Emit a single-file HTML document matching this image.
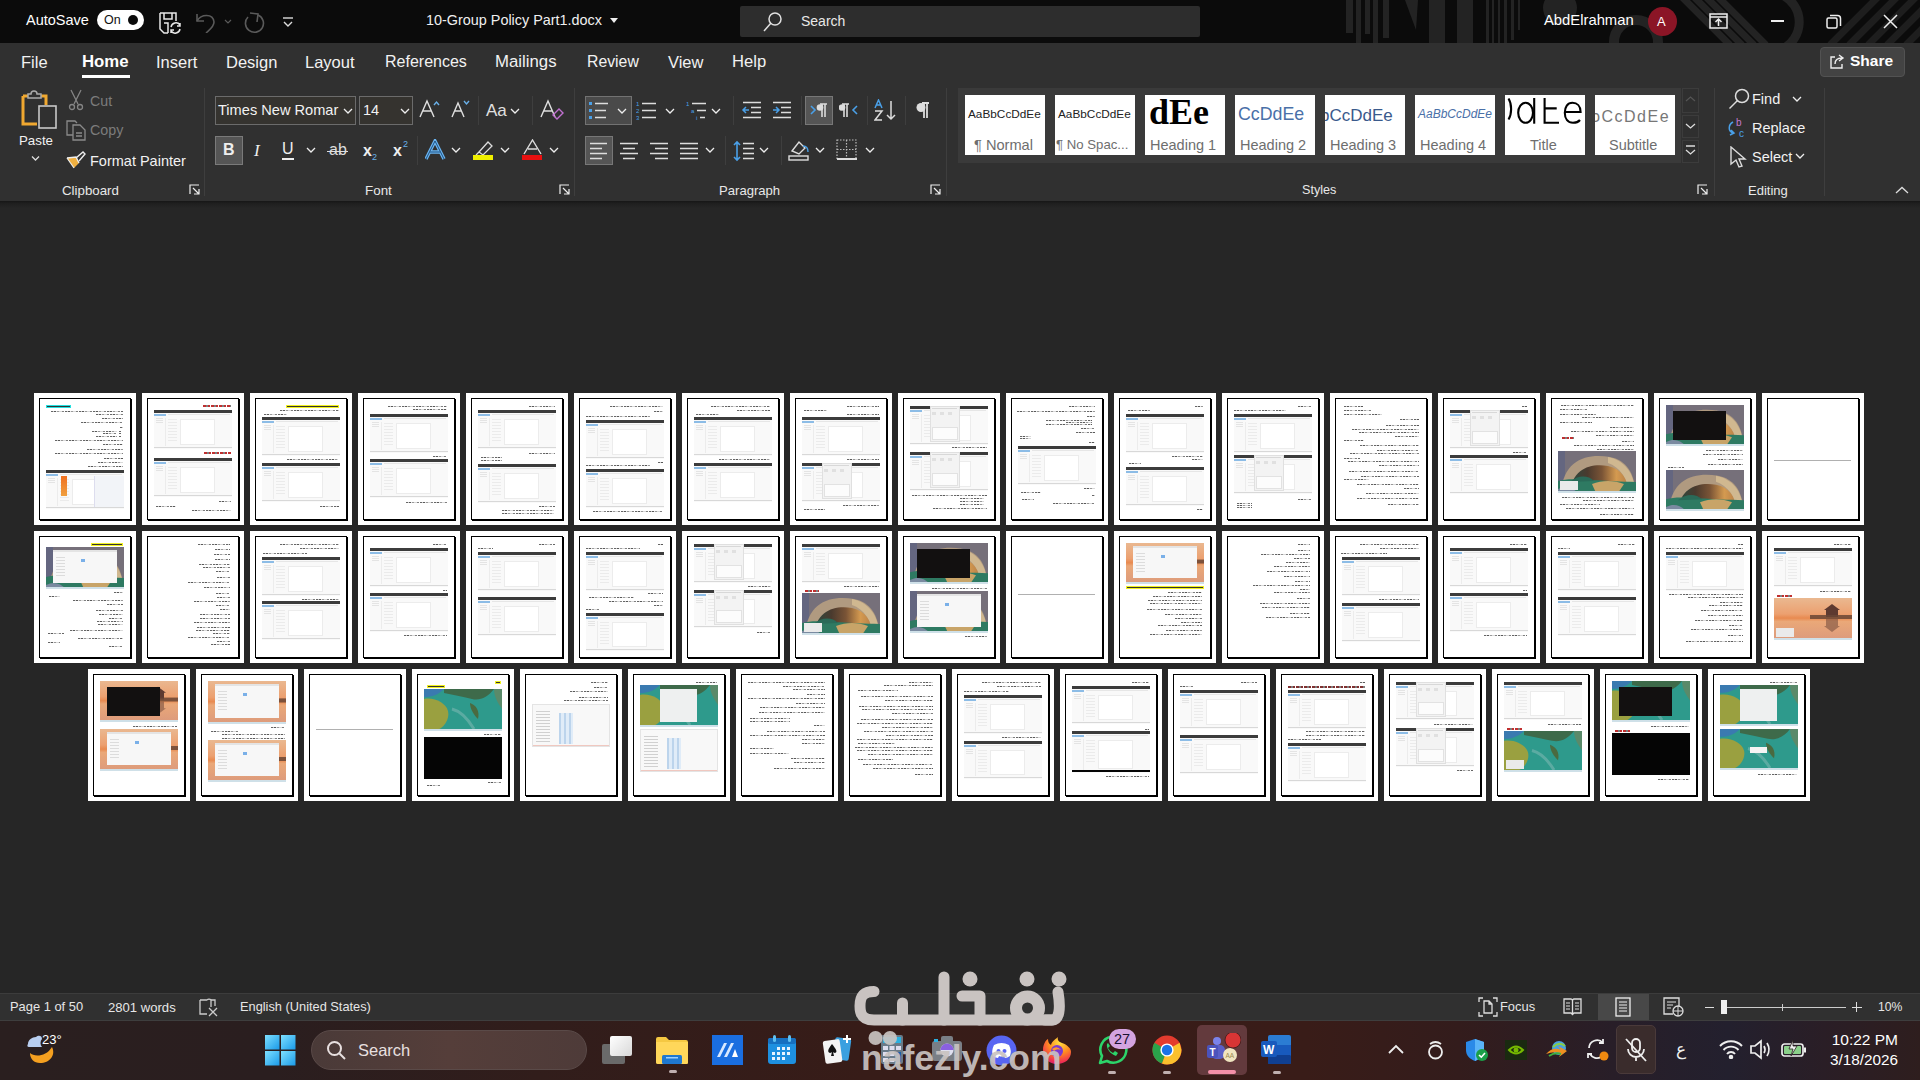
<!DOCTYPE html>
<html><head><meta charset="utf-8"><title>Word</title><style>
*{margin:0;padding:0;box-sizing:border-box}
html,body{width:1920px;height:1080px;overflow:hidden;background:#262626;font-family:"Liberation Sans",sans-serif;color:#fff}
.a{position:absolute}
.t{position:absolute;white-space:nowrap;line-height:1}
#title{left:0;top:0;width:1920px;height:43px;background:#0b0b0b}
#ribbon{left:0;top:43px;width:1920px;height:158px;background:#303030}
#shadow{left:0;top:201px;width:1920px;height:7px;background:linear-gradient(#161616,#1e1e1e 30%,#262626)}
#canvas{left:0;top:201px;width:1920px;height:792px;background:#262626}
#status{left:0;top:993px;width:1920px;height:28px;background:#303030;border-top:1px solid #3c3c3c;border-bottom:1px solid #3e3e3e}
#taskbar{left:0;top:1021px;width:1920px;height:59px;background:linear-gradient(90deg,#2a1f1f 0%,#2a1e1f 14%,#311d1b 28%,#371c18 45%,#391c18 68%,#331c1c 76%,#281e28 84%,#23202e 90%,#2a1e26 95%,#2e1e1e 100%)}
.pg{position:absolute;width:102px;height:132px;background:#fff;overflow:hidden}
.bd{position:absolute;left:5px;top:5px;width:92px;height:122px;border:1px solid #000;box-shadow:1px 1px 0 #000}
.ln{position:absolute;height:1px;background:#9a9a9a}
.tx{position:absolute;height:1px;background:repeating-linear-gradient(90deg,rgba(0,0,0,.6) 0 2px,rgba(0,0,0,.2) 2px 3px,rgba(0,0,0,.65) 3px 5px,rgba(0,0,0,.1) 5px 6px,rgba(0,0,0,.4) 6px 8px,rgba(0,0,0,.15) 8px 11px,rgba(0,0,0,.5) 11px 13px,transparent 13px 14px)}
.ss{position:absolute;background:#ececec;overflow:hidden}
.ss i{position:absolute;display:block}
</style></head>
<body>
<div id="title" class="a"></div>
<div id="ribbon" class="a"></div>
<div id="canvas" class="a"></div>
<div id="shadow" class="a"></div>
<div id="status" class="a"></div>
<div id="taskbar" class="a"></div>
<svg class="a" style="left:0;top:0" width="1920" height="43" viewBox="0 0 1920 43">
 <g fill="#232323">
  <rect x="1346" y="0" width="7" height="33"/>
  <rect x="1356" y="0" width="5" height="43"/>
  <rect x="1365" y="0" width="5" height="34"/>
  <rect x="1373" y="0" width="5" height="43"/>
  <rect x="1383" y="0" width="6" height="38"/>
  <path d="M1405 0 L1418 0 L1416 30 Z"/>
  <rect x="1429" y="0" width="16" height="43"/>
  <rect x="1457" y="0" width="16" height="43"/>
  <rect x="1486" y="0" width="3" height="43"/>
  <rect x="1492" y="0" width="2" height="43"/>
  <rect x="1498" y="0" width="2" height="43"/>
  <rect x="1504" y="0" width="3" height="43"/>
  <rect x="1511" y="0" width="3" height="40"/>
  <rect x="1518" y="0" width="2" height="30"/>
  <circle cx="1560" cy="8" r="17"/>
 </g>
 <g fill="none" stroke="#232323">
  <circle cx="1636" cy="42" r="22" stroke-width="10"/>
  <path d="M1780 -6 A30 30 0 0 1 1780 50" stroke-width="9"/>
 </g>
 <g stroke="#232323" stroke-width="7">
  <path d="M1680 -5 L1730 45 M1692 -5 L1742 45 M1704 -5 L1754 45 M1716 -5 L1766 45"/>
  <path d="M1830 45 L1880 -5 M1849 45 L1899 -5 M1868 45 L1918 -5 M1887 45 L1937 -5 M1906 45 L1956 -5" stroke="#1e1e1e"/>
 </g>
</svg>
<div class="t" style="left:26px;top:13px;font-size:14.5px;color:#fff">AutoSave</div>
<div class="a" style="left:97px;top:10px;width:47px;height:20px;border-radius:10px;background:#fff"></div>
<div class="t" style="left:104px;top:14px;font-size:12.5px;color:#111">On</div>
<div class="a" style="left:128px;top:15px;width:10px;height:10px;border-radius:5px;background:#0b0b0b"></div>
<svg class="a" style="left:158px;top:11px" width="24" height="24" viewBox="0 0 24 24" fill="none" stroke="#e8e8e8" stroke-width="1.5">
 <path d="M2 2 H18 V10 M2 2 V18 L6 22 H10"/><path d="M6 2 V8 H14 V2"/><path d="M6 12 H10 V22"/>
 <path d="M13 16 a5 5 0 0 1 9 -2 M22 12 v3 h-3 M22 18 a5 5 0 0 1 -9 2 M13 22 v-3 h3"/>
</svg>
<svg class="a" style="left:193px;top:11px" width="40" height="22" viewBox="0 0 40 22" fill="none" stroke="#5a5a5a" stroke-width="1.6">
 <path d="M4 3 L4 10 L11 10"/><path d="M4 10 C8 3 20 2 21 11 C21 16 16 19 13 22"/><path d="M32 9 l3 3 l3 -3" stroke-width="1.2"/>
</svg>
<svg class="a" style="left:241px;top:11px" width="24" height="24" viewBox="0 0 24 24" fill="none" stroke="#5a5a5a" stroke-width="1.6">
 <path d="M7 6 A9 9 0 1 0 17 4"/><path d="M9 2 L17 3 L16 11" />
</svg>
<svg class="a" style="left:281px;top:15px" width="14" height="14" viewBox="0 0 14 14" fill="none" stroke="#ddd" stroke-width="1.4">
 <path d="M2 3 H12"/><path d="M3 7 L7 11 L11 7"/>
</svg>
<div class="t" style="left:426px;top:13px;font-size:14.4px;color:#f0f0f0">10-Group Policy Part1.docx</div>
<svg class="a" style="left:609px;top:16px" width="10" height="8"><path d="M1 2 L9 2 L5 7 Z" fill="#eee"/></svg>
<div class="a" style="left:740px;top:6px;width:460px;height:31px;background:#2d2d2d;border-radius:2px"></div>
<svg class="a" style="left:762px;top:11px" width="22" height="22" viewBox="0 0 22 22" fill="none" stroke="#e0e0e0" stroke-width="1.5">
 <circle cx="13" cy="8" r="6"/><path d="M9 12 L2 20"/>
</svg>
<div class="t" style="left:801px;top:14px;font-size:14px;color:#e8e8e8">Search</div>
<div class="t" style="left:1544px;top:13px;font-size:14.8px;color:#fff">AbdElrahman</div>
<div class="a" style="left:1648px;top:7px;width:29px;height:29px;border-radius:50%;background:#8b1526"></div>
<div class="t" style="left:1657px;top:15px;font-size:13px;color:#fff">A</div>
<svg class="a" style="left:1709px;top:13px" width="22" height="18" viewBox="0 0 22 18" fill="none" stroke="#eee" stroke-width="1.5">
 <rect x="1" y="1" width="17" height="14"/><path d="M1 4 H18"/><path d="M9.5 13 V6 M6.5 9 L9.5 6 L12.5 9"/>
</svg>
<div class="a" style="left:1771px;top:20px;width:13px;height:1.5px;background:#eee"></div>
<svg class="a" style="left:1826px;top:14px" width="16" height="16" viewBox="0 0 16 16" fill="none" stroke="#eee" stroke-width="1.5">
 <rect x="1" y="4" width="10" height="10" rx="1.5"/><path d="M4 1.5 H11.5 A3 3 0 0 1 14.5 4.5 V12"/>
</svg>
<svg class="a" style="left:1883px;top:14px" width="15" height="15" viewBox="0 0 15 15" stroke="#eee" stroke-width="1.5">
 <path d="M1 1 L14 14 M14 1 L1 14"/>
</svg>

<!-- tabs -->
<div class="t" style="left:21px;top:54px;font-size:16.5px;color:#f2f2f2">File</div>
<div class="t" style="left:82px;top:54px;font-size:16.8px;color:#fff;font-weight:bold">Home</div>
<div class="a" style="left:82px;top:75px;width:48px;height:3px;background:#fff"></div>
<div class="t" style="left:156px;top:54px;font-size:16.5px;color:#f2f2f2">Insert</div>
<div class="t" style="left:226px;top:54px;font-size:16.5px;color:#f2f2f2">Design</div>
<div class="t" style="left:305px;top:54px;font-size:16.5px;color:#f2f2f2">Layout</div>
<div class="t" style="left:385px;top:54px;font-size:16px;color:#f2f2f2">References</div>
<div class="t" style="left:495px;top:54px;font-size:16.8px;color:#f2f2f2">Mailings</div>
<div class="t" style="left:587px;top:54px;font-size:15.8px;color:#f2f2f2">Review</div>
<div class="t" style="left:668px;top:54px;font-size:16.5px;color:#f2f2f2">View</div>
<div class="t" style="left:732px;top:54px;font-size:16.6px;color:#f2f2f2">Help</div>
<!-- share -->
<div class="a" style="left:1820px;top:47px;width:85px;height:30px;background:#434343;border:1px solid #525252;border-radius:4px"></div>
<svg class="a" style="left:1829px;top:53px" width="17" height="17" viewBox="0 0 17 17" fill="none" stroke="#eee" stroke-width="1.4"><path d="M6 4 H2 V15 H13 V11"/><path d="M6 11 C6 6 9 5 13 5 M10 2 L14 5 L10 8"/></svg>
<div class="t" style="left:1850px;top:53px;font-size:15.5px;color:#fff;font-weight:bold">Share</div>

<!-- separators -->
<div class="a" style="left:204px;top:88px;width:1px;height:108px;background:#3e3e3e"></div>
<div class="a" style="left:574px;top:88px;width:1px;height:108px;background:#3e3e3e"></div>
<div class="a" style="left:946px;top:88px;width:1px;height:108px;background:#3e3e3e"></div>
<div class="a" style="left:1714px;top:88px;width:1px;height:108px;background:#3e3e3e"></div>
<div class="a" style="left:1824px;top:88px;width:1px;height:108px;background:#3e3e3e"></div>

<!-- CLIPBOARD -->
<svg class="a" style="left:20px;top:88px" width="40" height="42" viewBox="0 0 40 42" fill="none">
 <path d="M3 8 H9 M19 8 H26 V17" stroke="#f0a830" stroke-width="3"/>
 <path d="M3 8 V36 H17" stroke="#f0a830" stroke-width="3"/>
 <path d="M8 10 V6 H11 A3 3 0 0 1 17 6 H21 V10 Z" stroke="#aaa" stroke-width="1.5" fill="#303030"/>
 <rect x="19" y="18" width="17" height="22" stroke="#c8c8c8" stroke-width="1.6" fill="#303030"/>
</svg>
<div class="t" style="left:19px;top:134px;font-size:13.3px;color:#f2f2f2">Paste</div>
<svg class="a" style="left:31px;top:155px" width="9" height="7"><path d="M1 1.5 L4.5 5 L8 1.5" stroke="#ddd" stroke-width="1.3" fill="none"/></svg>
<svg class="a" style="left:68px;top:89px" width="16" height="22" viewBox="0 0 16 22" fill="none" stroke="#858585" stroke-width="1.3">
 <path d="M3 1 L10 15 M13 1 L6 15"/><circle cx="4" cy="18" r="2.5"/><circle cx="12" cy="18" r="2.5"/>
</svg>
<div class="t" style="left:90px;top:94px;font-size:14.2px;color:#7c7c7c">Cut</div>
<svg class="a" style="left:65px;top:119px" width="22" height="22" viewBox="0 0 22 22" fill="none" stroke="#8a8a8a" stroke-width="1.3">
 <path d="M8 16 H2 V2 H10 L12 4"/><path d="M8 6 H15 L20 11 V21 H8 Z"/><path d="M11 14 H17 M11 17 H17"/>
</svg>
<div class="t" style="left:90px;top:123px;font-size:14.3px;color:#7c7c7c">Copy</div>
<svg class="a" style="left:65px;top:149px" width="22" height="20" viewBox="0 0 22 20" fill="none">
 <path d="M2 9 L9 19 L14 14 L11 8 Z" fill="#f0b040"/><path d="M2 9 L11 8 L14 14" stroke="#eee" stroke-width="1.3"/>
 <path d="M11 9 L18 3 L20 5 L14 12" stroke="#eee" stroke-width="1.4"/>
 <path d="M2 9 L9 19" stroke="#eee" stroke-width="1.2"/>
</svg>
<div class="t" style="left:90px;top:154px;font-size:14.5px;color:#f2f2f2">Format Painter</div>
<div class="t" style="left:62px;top:184px;font-size:13.3px;color:#e8e8e8">Clipboard</div>
<svg class="a" style="left:189px;top:184px" width="12" height="12" viewBox="0 0 12 12" fill="none" stroke="#eee" stroke-width="1.2"><path d="M1 10 V1 H10"/><path d="M4 4 L10 10 M10 5 V10 H5"/></svg>

<!-- FONT -->
<div class="a" style="left:215px;top:96px;width:141px;height:29px;background:#35332f;border:1px solid #6b6b6b"></div>
<div class="t" style="left:218px;top:103px;font-size:14.6px;color:#f2f2f2">Times New Romar</div>
<svg class="a" style="left:343px;top:107px" width="10" height="8"><path d="M1 2 L5 6 L9 2" stroke="#eee" stroke-width="1.3" fill="none"/></svg>
<div class="a" style="left:359px;top:96px;width:54px;height:29px;background:#35332f;border:1px solid #6b6b6b"></div>
<div class="t" style="left:363px;top:103px;font-size:14.6px;color:#f2f2f2">14</div>
<svg class="a" style="left:400px;top:107px" width="10" height="8"><path d="M1 2 L5 6 L9 2" stroke="#eee" stroke-width="1.3" fill="none"/></svg>
<svg class="a" style="left:419px;top:99px" width="22" height="20" viewBox="0 0 22 20" fill="none" stroke="#e0e0e0" stroke-width="1.4"><path d="M1 18 L8 2 L15 18 M4 12 H12"/><path d="M15 6 L17.5 3 L20 6" stroke="#6ab0e8"/></svg>
<svg class="a" style="left:450px;top:99px" width="22" height="20" viewBox="0 0 22 20" fill="none" stroke="#e0e0e0" stroke-width="1.4"><path d="M2 18 L8 4 L14 18 M5 12 H11"/><path d="M14 2 L16.5 5 L19 2" stroke="#6ab0e8"/></svg>
<div class="a" style="left:478px;top:96px;width:1px;height:29px;background:#3e3e3e"></div>
<div class="t" style="left:486px;top:102px;font-size:17px;color:#e0e0e0">Aa</div>
<svg class="a" style="left:510px;top:107px" width="10" height="8"><path d="M1 2 L5 6 L9 2" stroke="#eee" stroke-width="1.3" fill="none"/></svg>
<div class="a" style="left:532px;top:96px;width:1px;height:29px;background:#3e3e3e"></div>
<svg class="a" style="left:540px;top:99px" width="24" height="22" viewBox="0 0 24 22" fill="none" stroke-width="1.4"><path d="M1 18 L8 2 L15 18 M4 12 H12" stroke="#e0e0e0"/><path d="M13 16 L19 10 L23 14 L17 20 Z" stroke="#c070d0"/></svg>

<div class="a" style="left:215px;top:136px;width:28px;height:29px;background:#555;border:1px solid #7a7a7a"></div>
<div class="t" style="left:223px;top:142px;font-size:16px;color:#eee;font-weight:bold">B</div>
<div class="t" style="left:254px;top:142px;font-size:17px;color:#eee;font-style:italic;font-family:'Liberation Serif',serif">I</div>
<div class="t" style="left:282px;top:141px;font-size:16px;color:#eee">U</div>
<div class="a" style="left:282px;top:158px;width:12px;height:1.5px;background:#eee"></div>
<svg class="a" style="left:306px;top:146px" width="10" height="8"><path d="M1 2 L5 6 L9 2" stroke="#eee" stroke-width="1.3" fill="none"/></svg>
<div class="t" style="left:329px;top:142px;font-size:16px;color:#ddd">ab</div>
<div class="a" style="left:327px;top:151px;width:21px;height:1.3px;background:#ddd"></div>
<div class="t" style="left:363px;top:143px;font-size:16px;color:#eee;font-weight:bold">x</div>
<div class="t" style="left:372px;top:153px;font-size:9px;color:#6ab0e8">2</div>
<div class="t" style="left:393px;top:143px;font-size:16px;color:#eee;font-weight:bold">x</div>
<div class="t" style="left:403px;top:140px;font-size:9px;color:#6ab0e8">2</div>
<div class="a" style="left:417px;top:136px;width:1px;height:29px;background:#3e3e3e"></div>
<svg class="a" style="left:425px;top:139px" width="21" height="22" viewBox="0 0 21 22" fill="none"><path d="M1 20 L10 2 L19 20 M5 13 H15" stroke="#6ab4f0" stroke-width="3.4"/><path d="M1 20 L10 2 L19 20 M5 13 H15" stroke="#1e5080" stroke-width="1"/></svg>
<svg class="a" style="left:451px;top:146px" width="10" height="8"><path d="M1 2 L5 6 L9 2" stroke="#eee" stroke-width="1.3" fill="none"/></svg>
<svg class="a" style="left:473px;top:139px" width="22" height="22" viewBox="0 0 22 22" fill="none" stroke="#ddd" stroke-width="1.3"><path d="M6 13 L15 3 L19 7 L10 16 Z M6 13 L3 16"/></svg>
<div class="a" style="left:473px;top:155px;width:20px;height:5px;background:#f0f000"></div>
<svg class="a" style="left:500px;top:146px" width="10" height="8"><path d="M1 2 L5 6 L9 2" stroke="#eee" stroke-width="1.3" fill="none"/></svg>
<svg class="a" style="left:522px;top:139px" width="21" height="16" viewBox="0 0 21 16" fill="none" stroke="#ddd" stroke-width="1.4"><path d="M2 15 L10.5 1 L19 15 M6 10 H15"/></svg>
<div class="a" style="left:522px;top:155px;width:20px;height:5px;background:#e81010"></div>
<svg class="a" style="left:549px;top:146px" width="10" height="8"><path d="M1 2 L5 6 L9 2" stroke="#eee" stroke-width="1.3" fill="none"/></svg>
<div class="t" style="left:365px;top:184px;font-size:13.4px;color:#e8e8e8">Font</div>
<svg class="a" style="left:559px;top:184px" width="12" height="12" viewBox="0 0 12 12" fill="none" stroke="#eee" stroke-width="1.2"><path d="M1 10 V1 H10"/><path d="M4 4 L10 10 M10 5 V10 H5"/></svg>

<!-- PARAGRAPH -->
<div class="a" style="left:585px;top:96px;width:47px;height:29px;background:#4a4a4a;border:1px solid #727272"></div>
<svg class="a" style="left:588px;top:100px" width="24" height="20" viewBox="0 0 24 20" fill="none">
 <rect x="1" y="2" width="3" height="3" fill="#4aa0e8"/><rect x="1" y="9" width="3" height="3" fill="#4aa0e8"/><rect x="1" y="16" width="3" height="3" fill="#4aa0e8"/>
 <path d="M7 3.5 H20 M7 10.5 H18 M7 17.5 H18" stroke="#ddd" stroke-width="1.4"/></svg>
<svg class="a" style="left:617px;top:107px" width="10" height="8"><path d="M1 2 L5 6 L9 2" stroke="#eee" stroke-width="1.3" fill="none"/></svg>
<svg class="a" style="left:636px;top:100px" width="24" height="20" viewBox="0 0 24 20" fill="none">
 <text x="0" y="6" font-size="6" fill="#4aa0e8" font-family="Liberation Sans">1</text><text x="0" y="13" font-size="6" fill="#4aa0e8" font-family="Liberation Sans">2</text><text x="0" y="20" font-size="6" fill="#4aa0e8" font-family="Liberation Sans">3</text>
 <path d="M6 3.5 H20 M6 10.5 H20 M6 17.5 H20" stroke="#ddd" stroke-width="1.4"/></svg>
<svg class="a" style="left:665px;top:107px" width="10" height="8"><path d="M1 2 L5 6 L9 2" stroke="#eee" stroke-width="1.3" fill="none"/></svg>
<svg class="a" style="left:686px;top:100px" width="24" height="20" viewBox="0 0 24 20" fill="none">
 <text x="0" y="6" font-size="6" fill="#4aa0e8" font-family="Liberation Sans">1</text><text x="5" y="13" font-size="6" fill="#4aa0e8" font-family="Liberation Sans">a</text><text x="10" y="20" font-size="6" fill="#4aa0e8" font-family="Liberation Sans">i</text>
 <path d="M6 3.5 H20 M11 10.5 H20 M14 17.5 H19" stroke="#ddd" stroke-width="1.4"/></svg>
<svg class="a" style="left:711px;top:107px" width="10" height="8"><path d="M1 2 L5 6 L9 2" stroke="#eee" stroke-width="1.3" fill="none"/></svg>
<div class="a" style="left:733px;top:96px;width:1px;height:29px;background:#3e3e3e"></div>
<svg class="a" style="left:741px;top:100px" width="22" height="20" viewBox="0 0 22 20" fill="none">
 <path d="M2 2.5 H20 M10 7.5 H20 M10 12.5 H20 M2 17.5 H20" stroke="#ddd" stroke-width="1.4"/><path d="M8 10 H2 M5 7 L2 10 L5 13" stroke="#4aa0e8" stroke-width="1.5"/></svg>
<svg class="a" style="left:771px;top:100px" width="22" height="20" viewBox="0 0 22 20" fill="none">
 <path d="M2 2.5 H20 M10 7.5 H20 M10 12.5 H20 M2 17.5 H20" stroke="#ddd" stroke-width="1.4"/><path d="M2 10 H8 M5 7 L8 10 L5 13" stroke="#4aa0e8" stroke-width="1.5"/></svg>
<div class="a" style="left:801px;top:96px;width:1px;height:29px;background:#3e3e3e"></div>
<div class="a" style="left:805px;top:96px;width:28px;height:29px;background:#555;border:1px solid #777"></div>
<svg class="a" style="left:810px;top:102px" width="20" height="16" viewBox="0 0 20 16" fill="none"><path d="M1 4 L5 8 L1 12" stroke="#4aa0e8" stroke-width="1.6"/><path d="M10 2 H17 M12 2 V15 M15 2 V15" stroke="#ddd" stroke-width="1.6"/><circle cx="10" cy="5.5" r="3.3" fill="#ddd"/></svg>
<svg class="a" style="left:839px;top:102px" width="20" height="16" viewBox="0 0 20 16" fill="none"><path d="M18 4 L14 8 L18 12" stroke="#4aa0e8" stroke-width="1.6"/><path d="M3 2 H10 M5 2 V15 M8 2 V15" stroke="#ddd" stroke-width="1.6"/><circle cx="3" cy="5.5" r="3.3" fill="#ddd"/></svg>
<div class="a" style="left:867px;top:96px;width:1px;height:29px;background:#3e3e3e"></div>
<svg class="a" style="left:874px;top:99px" width="24" height="22" viewBox="0 0 24 22" fill="none">
 <path d="M1 9 L4.5 1 L8 9 M2.5 6 H6.5" stroke="#4aa0e8" stroke-width="1.5"/><path d="M1 12 H8 L1 21 H8" stroke="#ddd" stroke-width="1.5"/><path d="M17 2 V20 M13 16 L17 20 L21 16" stroke="#ddd" stroke-width="1.5"/></svg>
<div class="a" style="left:905px;top:96px;width:1px;height:29px;background:#3e3e3e"></div>
<svg class="a" style="left:915px;top:101px" width="16" height="18" viewBox="0 0 16 18" fill="none"><path d="M7 2 H14 M9 2 V17 M12 2 V17" stroke="#ddd" stroke-width="1.8"/><circle cx="6" cy="6.5" r="4.5" fill="#ddd"/></svg>

<div class="a" style="left:585px;top:136px;width:28px;height:29px;background:#555;border:1px solid #777"></div>
<svg class="a" style="left:589px;top:141px" width="20" height="20" viewBox="0 0 20 20" fill="none" stroke="#ddd" stroke-width="1.4"><path d="M1 2.5 H18 M1 7.5 H13 M1 12.5 H18 M1 17.5 H13"/></svg>
<svg class="a" style="left:619px;top:141px" width="20" height="20" viewBox="0 0 20 20" fill="none" stroke="#ddd" stroke-width="1.4"><path d="M1 2.5 H19 M4 7.5 H16 M1 12.5 H19 M4 17.5 H16"/></svg>
<svg class="a" style="left:649px;top:141px" width="20" height="20" viewBox="0 0 20 20" fill="none" stroke="#ddd" stroke-width="1.4"><path d="M1 2.5 H19 M6 7.5 H19 M1 12.5 H19 M6 17.5 H19"/></svg>
<svg class="a" style="left:679px;top:141px" width="20" height="20" viewBox="0 0 20 20" fill="none" stroke="#ddd" stroke-width="1.4"><path d="M1 2.5 H19 M1 7.5 H19 M1 12.5 H19 M1 17.5 H19"/></svg>
<svg class="a" style="left:705px;top:146px" width="10" height="8"><path d="M1 2 L5 6 L9 2" stroke="#eee" stroke-width="1.3" fill="none"/></svg>
<div class="a" style="left:725px;top:136px;width:1px;height:29px;background:#3e3e3e"></div>
<svg class="a" style="left:733px;top:140px" width="22" height="22" viewBox="0 0 22 22" fill="none">
 <path d="M4 2 V20 M1 5 L4 2 L7 5 M1 17 L4 20 L7 17" stroke="#4aa0e8" stroke-width="1.6"/><path d="M10 3.5 H21 M10 8.5 H21 M10 13.5 H21 M10 18.5 H21" stroke="#ddd" stroke-width="1.4"/></svg>
<svg class="a" style="left:759px;top:146px" width="10" height="8"><path d="M1 2 L5 6 L9 2" stroke="#eee" stroke-width="1.3" fill="none"/></svg>
<div class="a" style="left:781px;top:136px;width:1px;height:29px;background:#3e3e3e"></div>
<svg class="a" style="left:788px;top:139px" width="24" height="24" viewBox="0 0 24 24" fill="none" stroke="#ddd" stroke-width="1.4">
 <path d="M4 12 L11 3 L17 9 L11 15 Z"/><path d="M15 7 C18 7 20 9 20 13" stroke="#4aa0e8"/><rect x="1" y="17" width="19" height="4"/></svg>
<svg class="a" style="left:815px;top:146px" width="10" height="8"><path d="M1 2 L5 6 L9 2" stroke="#eee" stroke-width="1.3" fill="none"/></svg>
<svg class="a" style="left:836px;top:139px" width="22" height="22" viewBox="0 0 22 22" fill="none" stroke="#bbb" stroke-width="1.2" stroke-dasharray="1.5 1.5">
 <rect x="1" y="1" width="19" height="19"/><path d="M10.5 1 V20 M1 10.5 H20"/></svg>
<div class="a" style="left:837px;top:158px;width:20px;height:2px;background:#ddd"></div>
<svg class="a" style="left:865px;top:146px" width="10" height="8"><path d="M1 2 L5 6 L9 2" stroke="#eee" stroke-width="1.3" fill="none"/></svg>
<div class="t" style="left:719px;top:184px;font-size:13.1px;color:#e8e8e8">Paragraph</div>
<svg class="a" style="left:930px;top:184px" width="12" height="12" viewBox="0 0 12 12" fill="none" stroke="#eee" stroke-width="1.2"><path d="M1 10 V1 H10"/><path d="M4 4 L10 10 M10 5 V10 H5"/></svg>

<!-- STYLES -->
<div class="a" style="left:958px;top:88px;width:723px;height:75px;background:#3a3a3a"></div>
<div class="a" style="left:1682px;top:88px;width:17px;height:25px;background:#2f2f2f;border:1px solid #3c3c3c"></div>
<div class="a" style="left:1682px;top:115px;width:17px;height:23px;background:#2f2f2f;border:1px solid #3c3c3c"></div>
<div class="a" style="left:1682px;top:140px;width:17px;height:23px;background:#2f2f2f;border:1px solid #3c3c3c"></div>
<svg class="a" style="left:1685px;top:95px" width="11" height="8"><path d="M1 6 L5.5 2 L10 6" stroke="#555" stroke-width="1.2" fill="none"/></svg>
<svg class="a" style="left:1685px;top:122px" width="11" height="8"><path d="M1 2 L5.5 6 L10 2" stroke="#ddd" stroke-width="1.3" fill="none"/></svg>
<svg class="a" style="left:1685px;top:144px" width="11" height="13"><path d="M1 2 H10 M1 6 L5.5 10 L10 6" stroke="#ddd" stroke-width="1.3" fill="none"/></svg>

<div class="a" style="left:965px;top:95px;width:80px;height:60px;background:#fff;overflow:hidden">
 <div class="t" style="left:3px;top:14px;font-size:11.8px;color:#222">AaBbCcDdEe</div>
 <div class="t" style="left:9px;top:43px;font-size:14.6px;color:#6e6e6e">¶ Normal</div></div>
<div class="a" style="left:1055px;top:95px;width:80px;height:60px;background:#fff;overflow:hidden">
 <div class="t" style="left:3px;top:14px;font-size:11.8px;color:#222">AaBbCcDdEe</div>
 <div class="t" style="left:1px;top:43px;font-size:13.2px;color:#6e6e6e">¶ No Spac...</div></div>
<div class="a" style="left:1145px;top:95px;width:80px;height:60px;background:#fff;overflow:hidden">
 <div class="t" style="left:4px;top:-1px;font-size:36px;color:#000;font-weight:bold;font-family:'Liberation Serif',serif">dEe</div>
 <div class="t" style="left:5px;top:43px;font-size:14.5px;color:#6e6e6e">Heading 1</div></div>
<div class="a" style="left:1235px;top:95px;width:80px;height:60px;background:#fff;overflow:hidden">
 <div class="t" style="left:3px;top:11px;font-size:17.8px;color:#4a70a8">CcDdEe</div>
 <div class="t" style="left:5px;top:43px;font-size:14.5px;color:#6e6e6e">Heading 2</div></div>
<div class="a" style="left:1325px;top:95px;width:80px;height:60px;background:#fff;overflow:hidden">
 <div class="t" style="left:-5px;top:12px;font-size:17px;color:#3a5a8c">bCcDdEe</div>
 <div class="t" style="left:5px;top:43px;font-size:14.5px;color:#6e6e6e">Heading 3</div></div>
<div class="a" style="left:1415px;top:95px;width:80px;height:60px;background:#fff;overflow:hidden">
 <div class="t" style="left:3px;top:13px;font-size:12px;color:#4a70a8;font-style:italic">AaBbCcDdEe</div>
 <div class="t" style="left:5px;top:43px;font-size:14.5px;color:#6e6e6e">Heading 4</div></div>
<div class="a" style="left:1505px;top:95px;width:80px;height:60px;background:#fff;overflow:hidden">
 <svg class="a" style="left:0;top:0" width="80" height="32" viewBox="0 0 80 32" fill="none" stroke="#000" stroke-width="2.1">
  <path d="M3.5 3.5 C7 9 7 19 3.5 24.5"/>
  <ellipse cx="20.6" cy="17.8" rx="7.4" ry="10"/><path d="M29.2 3 V28.7"/>
  <path d="M39.6 3 V27.7 H54 M40 13.4 H51.7"/>
  <path d="M59.8 17 H75.6 C75.6 11 72 7.8 67.5 7.8 C62.5 7.8 59.8 12 59.8 17.8 C59.8 24 63 27.8 68 27.8 C71 27.8 73.5 26.8 75 25"/>
 </svg>
 <div class="t" style="left:25px;top:43px;font-size:14.5px;color:#6e6e6e">Title</div></div>
<div class="a" style="left:1595px;top:95px;width:80px;height:60px;background:#fff;overflow:hidden">
 <div class="t" style="left:-3px;top:14px;font-size:16px;color:#777;letter-spacing:1.5px">ɔCcDdEe</div>
 <div class="t" style="left:14px;top:43px;font-size:14.5px;color:#6e6e6e">Subtitle</div></div>
<div class="t" style="left:1302px;top:184px;font-size:12.6px;color:#e8e8e8">Styles</div>
<svg class="a" style="left:1697px;top:184px" width="12" height="12" viewBox="0 0 12 12" fill="none" stroke="#eee" stroke-width="1.2"><path d="M1 10 V1 H10"/><path d="M4 4 L10 10 M10 5 V10 H5"/></svg>

<!-- EDITING -->
<svg class="a" style="left:1728px;top:88px" width="22" height="22" viewBox="0 0 22 22" fill="none" stroke="#ddd" stroke-width="1.5"><circle cx="14" cy="8" r="6.5"/><path d="M9.5 12.5 L1.5 20.5"/></svg>
<div class="t" style="left:1752px;top:92px;font-size:14.5px;color:#f2f2f2">Find</div>
<svg class="a" style="left:1792px;top:95px" width="10" height="8"><path d="M1 2 L5 6 L9 2" stroke="#eee" stroke-width="1.3" fill="none"/></svg>
<svg class="a" style="left:1727px;top:116px" width="22" height="22" viewBox="0 0 22 22" fill="none">
 <text x="9" y="10" font-size="10" fill="#c47ad0" font-family="Liberation Sans">b</text><text x="12" y="21" font-size="10" fill="#4aa0e8" font-family="Liberation Sans">c</text>
 <path d="M6 6 C1 9 1 15 6 17 M4 14 L7 17 L3 19" stroke="#4aa0e8" stroke-width="1.5"/></svg>
<div class="t" style="left:1752px;top:121px;font-size:14.5px;color:#f2f2f2">Replace</div>
<svg class="a" style="left:1729px;top:146px" width="18" height="22" viewBox="0 0 18 22" fill="none" stroke="#ddd" stroke-width="1.4"><path d="M2 1 L16 13 H10 L13 20 L10 21 L7 14 L2 18 Z"/></svg>
<div class="t" style="left:1752px;top:150px;font-size:14.5px;color:#f2f2f2">Select</div>
<svg class="a" style="left:1795px;top:152px" width="10" height="8"><path d="M1 2 L5 6 L9 2" stroke="#eee" stroke-width="1.3" fill="none"/></svg>
<div class="t" style="left:1748px;top:184px;font-size:13px;color:#e8e8e8">Editing</div>
<svg class="a" style="left:1895px;top:186px" width="14" height="9"><path d="M1 7 L7 1.5 L13 7" stroke="#ddd" stroke-width="1.3" fill="none"/></svg>

<div class="pg" style="left:34px;top:393px"><div class="ln" style="left:12px;top:12px;width:25px;height:3px;background:#22e0e0"></div><div class="ln" style="left:13px;top:13px;width:23px;background:#333"></div><div class="tx" style="left:17px;top:18px;width:72px"></div><div class="tx" style="left:62px;top:21px;width:27px"></div><div class="tx" style="left:68px;top:25px;width:21px"></div><div class="tx" style="left:47px;top:29px;width:42px"></div><div class="tx" style="left:86px;top:34px;width:3px"></div><div class="tx" style="left:58px;top:38px;width:25px"></div><div class="tx" style="left:69px;top:40px;width:14px"></div><div class="tx" style="left:62px;top:43px;width:21px"></div><div class="tx" style="left:85px;top:38px;width:2px"></div><div class="tx" style="left:85px;top:40px;width:2px"></div><div class="tx" style="left:85px;top:43px;width:2px"></div><div class="tx" style="left:21px;top:47px;width:68px"></div><div class="tx" style="left:69px;top:51px;width:20px"></div><div class="tx" style="left:53px;top:56px;width:36px"></div><div class="tx" style="left:21px;top:60px;width:68px"></div><div class="tx" style="left:70px;top:65px;width:19px"></div><div class="tx" style="left:64px;top:69px;width:25px"></div><div class="tx" style="left:54px;top:73px;width:35px"></div><div class="ss" style="left:12px;top:77px;width:78px;height:39px;background:#f9f9f9"><i style="left:0;top:0;width:78px;height:3px;background:#3c3c3c"></i><i style="left:0;top:4px;width:12px;height:2px;background:#8cbce6"></i><i style="left:14px;top:4px;width:62px;height:1px;background:#e6e6e6"></i><i style="left:11px;top:8px;width:1px;height:28px;background:#ececec"></i><i style="left:26px;top:9px;width:35px;height:26px;background:#fff;border:1px solid #ececec"></i><i style="left:14px;top:9px;width:9px;height:22px;background:repeating-linear-gradient(#ebebeb 0 1px,transparent 1px 3px)"></i><i style="left:2px;top:8px;width:7px;height:6px;background:repeating-linear-gradient(#e4e4e4 0 1px,transparent 1px 2px)"></i><i style="left:0;top:37px;width:78px;height:1px;background:#d8d8d8"></i><i style="left:15px;top:6px;width:6px;height:20px;background:linear-gradient(#f07020,#f0a040)"></i><i style="left:48px;top:6px;width:30px;height:31px;background:#f2f4f8;border-left:1px solid #dde"></i></div><div class="bd"></div></div><div class="pg" style="left:142px;top:393px"><div class="tx" style="left:61px;top:12px;width:28px;height:2px;background:repeating-linear-gradient(90deg,#c03030 0 3px,rgba(0,0,0,.5) 3px 5px,#c03030 5px 7px,transparent 7px 8px)"></div><div class="ss" style="left:12px;top:17px;width:78px;height:39px;background:#f9f9f9"><i style="left:0;top:0;width:78px;height:3px;background:#3c3c3c"></i><i style="left:0;top:4px;width:12px;height:2px;background:#8cbce6"></i><i style="left:14px;top:4px;width:62px;height:1px;background:#e6e6e6"></i><i style="left:11px;top:8px;width:1px;height:28px;background:#ececec"></i><i style="left:26px;top:9px;width:35px;height:26px;background:#fff;border:1px solid #ececec"></i><i style="left:14px;top:9px;width:9px;height:22px;background:repeating-linear-gradient(#ebebeb 0 1px,transparent 1px 3px)"></i><i style="left:2px;top:8px;width:7px;height:6px;background:repeating-linear-gradient(#e4e4e4 0 1px,transparent 1px 2px)"></i><i style="left:0;top:37px;width:78px;height:1px;background:#d8d8d8"></i></div><div class="tx" style="left:62px;top:59px;width:27px;height:2px;background:repeating-linear-gradient(90deg,#c03030 0 3px,rgba(0,0,0,.5) 3px 5px,#c03030 5px 7px,transparent 7px 8px)"></div><div class="ss" style="left:12px;top:65px;width:78px;height:39px;background:#f9f9f9"><i style="left:0;top:0;width:78px;height:3px;background:#3c3c3c"></i><i style="left:0;top:4px;width:12px;height:2px;background:#8cbce6"></i><i style="left:14px;top:4px;width:62px;height:1px;background:#e6e6e6"></i><i style="left:11px;top:8px;width:1px;height:28px;background:#ececec"></i><i style="left:26px;top:9px;width:35px;height:26px;background:#fff;border:1px solid #ececec"></i><i style="left:14px;top:9px;width:9px;height:22px;background:repeating-linear-gradient(#ebebeb 0 1px,transparent 1px 3px)"></i><i style="left:2px;top:8px;width:7px;height:6px;background:repeating-linear-gradient(#e4e4e4 0 1px,transparent 1px 2px)"></i><i style="left:0;top:37px;width:78px;height:1px;background:#d8d8d8"></i></div><div class="tx" style="left:77px;top:108px;width:12px"></div><div class="tx" style="left:14px;top:113px;width:20px"></div><div class="tx" style="left:50px;top:117px;width:39px"></div><div class="bd"></div></div><div class="pg" style="left:250px;top:393px"><div class="ln" style="left:36px;top:12px;width:53px;height:3px;background:#f0f020"></div><div class="ln" style="left:37px;top:13px;width:51px;background:#333"></div><div class="tx" style="left:30px;top:17px;width:59px"></div><div class="tx" style="left:14px;top:21px;width:23px"></div><div class="ss" style="left:12px;top:24px;width:78px;height:39px;background:#f9f9f9"><i style="left:0;top:0;width:78px;height:3px;background:#3c3c3c"></i><i style="left:0;top:4px;width:12px;height:2px;background:#8cbce6"></i><i style="left:14px;top:4px;width:62px;height:1px;background:#e6e6e6"></i><i style="left:11px;top:8px;width:1px;height:28px;background:#ececec"></i><i style="left:26px;top:9px;width:35px;height:26px;background:#fff;border:1px solid #ececec"></i><i style="left:14px;top:9px;width:9px;height:22px;background:repeating-linear-gradient(#ebebeb 0 1px,transparent 1px 3px)"></i><i style="left:2px;top:8px;width:7px;height:6px;background:repeating-linear-gradient(#e4e4e4 0 1px,transparent 1px 2px)"></i><i style="left:0;top:37px;width:78px;height:1px;background:#d8d8d8"></i></div><div class="tx" style="left:37px;top:66px;width:51px"></div><div class="ss" style="left:12px;top:70px;width:78px;height:39px;background:#f9f9f9"><i style="left:0;top:0;width:78px;height:3px;background:#3c3c3c"></i><i style="left:0;top:4px;width:12px;height:2px;background:#8cbce6"></i><i style="left:14px;top:4px;width:62px;height:1px;background:#e6e6e6"></i><i style="left:11px;top:8px;width:1px;height:28px;background:#ececec"></i><i style="left:26px;top:9px;width:35px;height:26px;background:#fff;border:1px solid #ececec"></i><i style="left:14px;top:9px;width:9px;height:22px;background:repeating-linear-gradient(#ebebeb 0 1px,transparent 1px 3px)"></i><i style="left:2px;top:8px;width:7px;height:6px;background:repeating-linear-gradient(#e4e4e4 0 1px,transparent 1px 2px)"></i><i style="left:0;top:37px;width:78px;height:1px;background:#d8d8d8"></i></div><div class="tx" style="left:70px;top:113px;width:19px"></div><div class="bd"></div></div><div class="pg" style="left:358px;top:393px"><div class="tx" style="left:30px;top:13px;width:59px"></div><div class="tx" style="left:55px;top:16px;width:34px"></div><div class="ss" style="left:12px;top:21px;width:78px;height:39px;background:#f9f9f9"><i style="left:0;top:0;width:78px;height:3px;background:#3c3c3c"></i><i style="left:0;top:4px;width:12px;height:2px;background:#8cbce6"></i><i style="left:14px;top:4px;width:62px;height:1px;background:#e6e6e6"></i><i style="left:11px;top:8px;width:1px;height:28px;background:#ececec"></i><i style="left:26px;top:9px;width:35px;height:26px;background:#fff;border:1px solid #ececec"></i><i style="left:14px;top:9px;width:9px;height:22px;background:repeating-linear-gradient(#ebebeb 0 1px,transparent 1px 3px)"></i><i style="left:2px;top:8px;width:7px;height:6px;background:repeating-linear-gradient(#e4e4e4 0 1px,transparent 1px 2px)"></i><i style="left:0;top:37px;width:78px;height:1px;background:#d8d8d8"></i></div><div class="tx" style="left:75px;top:63px;width:14px"></div><div class="ss" style="left:12px;top:66px;width:78px;height:39px;background:#f9f9f9"><i style="left:0;top:0;width:78px;height:3px;background:#3c3c3c"></i><i style="left:0;top:4px;width:12px;height:2px;background:#8cbce6"></i><i style="left:14px;top:4px;width:62px;height:1px;background:#e6e6e6"></i><i style="left:11px;top:8px;width:1px;height:28px;background:#ececec"></i><i style="left:26px;top:9px;width:35px;height:26px;background:#fff;border:1px solid #ececec"></i><i style="left:14px;top:9px;width:9px;height:22px;background:repeating-linear-gradient(#ebebeb 0 1px,transparent 1px 3px)"></i><i style="left:2px;top:8px;width:7px;height:6px;background:repeating-linear-gradient(#e4e4e4 0 1px,transparent 1px 2px)"></i><i style="left:0;top:37px;width:78px;height:1px;background:#d8d8d8"></i></div><div class="tx" style="left:48px;top:109px;width:41px"></div><div class="bd"></div></div><div class="pg" style="left:466px;top:393px"><div class="tx" style="left:63px;top:13px;width:26px"></div><div class="ss" style="left:12px;top:17px;width:78px;height:39px;background:#f9f9f9"><i style="left:0;top:0;width:78px;height:3px;background:#3c3c3c"></i><i style="left:0;top:4px;width:12px;height:2px;background:#8cbce6"></i><i style="left:14px;top:4px;width:62px;height:1px;background:#e6e6e6"></i><i style="left:11px;top:8px;width:1px;height:28px;background:#ececec"></i><i style="left:26px;top:9px;width:35px;height:26px;background:#fff;border:1px solid #ececec"></i><i style="left:14px;top:9px;width:9px;height:22px;background:repeating-linear-gradient(#ebebeb 0 1px,transparent 1px 3px)"></i><i style="left:2px;top:8px;width:7px;height:6px;background:repeating-linear-gradient(#e4e4e4 0 1px,transparent 1px 2px)"></i><i style="left:0;top:37px;width:78px;height:1px;background:#d8d8d8"></i></div><div class="tx" style="left:63px;top:60px;width:26px"></div><div class="tx" style="left:15px;top:64px;width:21px"></div><div class="tx" style="left:15px;top:67px;width:21px"></div><div class="ss" style="left:12px;top:71px;width:78px;height:39px;background:#f9f9f9"><i style="left:0;top:0;width:78px;height:3px;background:#3c3c3c"></i><i style="left:0;top:4px;width:12px;height:2px;background:#8cbce6"></i><i style="left:14px;top:4px;width:62px;height:1px;background:#e6e6e6"></i><i style="left:11px;top:8px;width:1px;height:28px;background:#ececec"></i><i style="left:26px;top:9px;width:35px;height:26px;background:#fff;border:1px solid #ececec"></i><i style="left:14px;top:9px;width:9px;height:22px;background:repeating-linear-gradient(#ebebeb 0 1px,transparent 1px 3px)"></i><i style="left:2px;top:8px;width:7px;height:6px;background:repeating-linear-gradient(#e4e4e4 0 1px,transparent 1px 2px)"></i><i style="left:0;top:37px;width:78px;height:1px;background:#d8d8d8"></i></div><div class="tx" style="left:73px;top:113px;width:16px"></div><div class="tx" style="left:36px;top:117px;width:52px"></div><div class="tx" style="left:36px;top:120px;width:52px"></div><div class="bd"></div></div><div class="pg" style="left:574px;top:393px"><div class="tx" style="left:36px;top:13px;width:53px"></div><div class="tx" style="left:80px;top:18px;width:9px"></div><div class="tx" style="left:12px;top:23px;width:64px"></div><div class="ss" style="left:12px;top:27px;width:78px;height:39px;background:#f9f9f9"><i style="left:0;top:0;width:78px;height:3px;background:#3c3c3c"></i><i style="left:0;top:4px;width:12px;height:2px;background:#8cbce6"></i><i style="left:14px;top:4px;width:62px;height:1px;background:#e6e6e6"></i><i style="left:11px;top:8px;width:1px;height:28px;background:#ececec"></i><i style="left:26px;top:9px;width:35px;height:26px;background:#fff;border:1px solid #ececec"></i><i style="left:14px;top:9px;width:9px;height:22px;background:repeating-linear-gradient(#ebebeb 0 1px,transparent 1px 3px)"></i><i style="left:2px;top:8px;width:7px;height:6px;background:repeating-linear-gradient(#e4e4e4 0 1px,transparent 1px 2px)"></i><i style="left:0;top:37px;width:78px;height:1px;background:#d8d8d8"></i></div><div class="tx" style="left:84px;top:69px;width:5px"></div><div class="tx" style="left:12px;top:72px;width:64px"></div><div class="ss" style="left:12px;top:76px;width:78px;height:39px;background:#f9f9f9"><i style="left:0;top:0;width:78px;height:3px;background:#3c3c3c"></i><i style="left:0;top:4px;width:12px;height:2px;background:#8cbce6"></i><i style="left:14px;top:4px;width:62px;height:1px;background:#e6e6e6"></i><i style="left:11px;top:8px;width:1px;height:28px;background:#ececec"></i><i style="left:26px;top:9px;width:35px;height:26px;background:#fff;border:1px solid #ececec"></i><i style="left:14px;top:9px;width:9px;height:22px;background:repeating-linear-gradient(#ebebeb 0 1px,transparent 1px 3px)"></i><i style="left:2px;top:8px;width:7px;height:6px;background:repeating-linear-gradient(#e4e4e4 0 1px,transparent 1px 2px)"></i><i style="left:0;top:37px;width:78px;height:1px;background:#d8d8d8"></i></div><div class="tx" style="left:19px;top:118px;width:70px"></div><div class="bd"></div></div><div class="pg" style="left:682px;top:393px"><div class="tx" style="left:29px;top:13px;width:59px"></div><div class="tx" style="left:55px;top:17px;width:33px"></div><div class="tx" style="left:14px;top:21px;width:23px"></div><div class="ss" style="left:12px;top:24px;width:78px;height:39px;background:#f9f9f9"><i style="left:0;top:0;width:78px;height:3px;background:#3c3c3c"></i><i style="left:0;top:4px;width:12px;height:2px;background:#8cbce6"></i><i style="left:14px;top:4px;width:62px;height:1px;background:#e6e6e6"></i><i style="left:11px;top:8px;width:1px;height:28px;background:#ececec"></i><i style="left:26px;top:9px;width:35px;height:26px;background:#fff;border:1px solid #ececec"></i><i style="left:14px;top:9px;width:9px;height:22px;background:repeating-linear-gradient(#ebebeb 0 1px,transparent 1px 3px)"></i><i style="left:2px;top:8px;width:7px;height:6px;background:repeating-linear-gradient(#e4e4e4 0 1px,transparent 1px 2px)"></i><i style="left:0;top:37px;width:78px;height:1px;background:#d8d8d8"></i></div><div class="tx" style="left:37px;top:66px;width:51px"></div><div class="ss" style="left:12px;top:70px;width:78px;height:39px;background:#f9f9f9"><i style="left:0;top:0;width:78px;height:3px;background:#3c3c3c"></i><i style="left:0;top:4px;width:12px;height:2px;background:#8cbce6"></i><i style="left:14px;top:4px;width:62px;height:1px;background:#e6e6e6"></i><i style="left:11px;top:8px;width:1px;height:28px;background:#ececec"></i><i style="left:26px;top:9px;width:35px;height:26px;background:#fff;border:1px solid #ececec"></i><i style="left:14px;top:9px;width:9px;height:22px;background:repeating-linear-gradient(#ebebeb 0 1px,transparent 1px 3px)"></i><i style="left:2px;top:8px;width:7px;height:6px;background:repeating-linear-gradient(#e4e4e4 0 1px,transparent 1px 2px)"></i><i style="left:0;top:37px;width:78px;height:1px;background:#d8d8d8"></i></div><div class="bd"></div></div><div class="pg" style="left:790px;top:393px"><div class="tx" style="left:57px;top:13px;width:32px"></div><div class="tx" style="left:14px;top:17px;width:23px"></div><div class="tx" style="left:57px;top:21px;width:32px"></div><div class="ss" style="left:12px;top:24px;width:78px;height:39px;background:#f9f9f9"><i style="left:0;top:0;width:78px;height:3px;background:#3c3c3c"></i><i style="left:0;top:4px;width:12px;height:2px;background:#8cbce6"></i><i style="left:14px;top:4px;width:62px;height:1px;background:#e6e6e6"></i><i style="left:11px;top:8px;width:1px;height:28px;background:#ececec"></i><i style="left:26px;top:9px;width:35px;height:26px;background:#fff;border:1px solid #ececec"></i><i style="left:14px;top:9px;width:9px;height:22px;background:repeating-linear-gradient(#ebebeb 0 1px,transparent 1px 3px)"></i><i style="left:2px;top:8px;width:7px;height:6px;background:repeating-linear-gradient(#e4e4e4 0 1px,transparent 1px 2px)"></i><i style="left:0;top:37px;width:78px;height:1px;background:#d8d8d8"></i></div><div class="tx" style="left:57px;top:66px;width:32px"></div><div class="ss" style="left:12px;top:70px;width:78px;height:39px;background:#f9f9f9"><i style="left:0;top:0;width:78px;height:3px;background:#3c3c3c"></i><i style="left:0;top:4px;width:12px;height:2px;background:#8cbce6"></i><i style="left:14px;top:4px;width:62px;height:1px;background:#e6e6e6"></i><i style="left:11px;top:8px;width:1px;height:28px;background:#ececec"></i><i style="left:26px;top:9px;width:35px;height:26px;background:#fff;border:1px solid #ececec"></i><i style="left:14px;top:9px;width:9px;height:22px;background:repeating-linear-gradient(#ebebeb 0 1px,transparent 1px 3px)"></i><i style="left:2px;top:8px;width:7px;height:6px;background:repeating-linear-gradient(#e4e4e4 0 1px,transparent 1px 2px)"></i><i style="left:0;top:37px;width:78px;height:1px;background:#d8d8d8"></i><i style="left:20px;top:0;width:30px;height:36px;background:#f3f3f3;border:1px solid #e0e0e0"></i><i style="left:22px;top:2px;width:25px;height:1px;background:#d8d8d8"></i><i style="left:22px;top:6px;width:22px;height:3px;background:repeating-linear-gradient(90deg,#e0e0e0 0 4px,transparent 4px 8px)"></i><i style="left:22px;top:21px;width:26px;height:13px;background:#fcfcfc;border:1px solid #e2e2e2"></i></div><div class="tx" style="left:53px;top:112px;width:36px"></div><div class="tx" style="left:14px;top:116px;width:21px"></div><div class="bd"></div></div><div class="pg" style="left:898px;top:393px"><div class="ss" style="left:12px;top:13px;width:78px;height:39px;background:#f9f9f9"><i style="left:0;top:0;width:78px;height:3px;background:#3c3c3c"></i><i style="left:0;top:4px;width:12px;height:2px;background:#8cbce6"></i><i style="left:14px;top:4px;width:62px;height:1px;background:#e6e6e6"></i><i style="left:11px;top:8px;width:1px;height:28px;background:#ececec"></i><i style="left:26px;top:9px;width:35px;height:26px;background:#fff;border:1px solid #ececec"></i><i style="left:14px;top:9px;width:9px;height:22px;background:repeating-linear-gradient(#ebebeb 0 1px,transparent 1px 3px)"></i><i style="left:2px;top:8px;width:7px;height:6px;background:repeating-linear-gradient(#e4e4e4 0 1px,transparent 1px 2px)"></i><i style="left:0;top:37px;width:78px;height:1px;background:#d8d8d8"></i><i style="left:20px;top:0;width:30px;height:36px;background:#f3f3f3;border:1px solid #e0e0e0"></i><i style="left:22px;top:2px;width:25px;height:1px;background:#d8d8d8"></i><i style="left:22px;top:6px;width:22px;height:3px;background:repeating-linear-gradient(90deg,#e0e0e0 0 4px,transparent 4px 8px)"></i><i style="left:22px;top:21px;width:26px;height:13px;background:#fcfcfc;border:1px solid #e2e2e2"></i></div><div class="tx" style="left:54px;top:54px;width:35px"></div><div class="ss" style="left:12px;top:59px;width:78px;height:39px;background:#f9f9f9"><i style="left:0;top:0;width:78px;height:3px;background:#3c3c3c"></i><i style="left:0;top:4px;width:12px;height:2px;background:#8cbce6"></i><i style="left:14px;top:4px;width:62px;height:1px;background:#e6e6e6"></i><i style="left:11px;top:8px;width:1px;height:28px;background:#ececec"></i><i style="left:26px;top:9px;width:35px;height:26px;background:#fff;border:1px solid #ececec"></i><i style="left:14px;top:9px;width:9px;height:22px;background:repeating-linear-gradient(#ebebeb 0 1px,transparent 1px 3px)"></i><i style="left:2px;top:8px;width:7px;height:6px;background:repeating-linear-gradient(#e4e4e4 0 1px,transparent 1px 2px)"></i><i style="left:0;top:37px;width:78px;height:1px;background:#d8d8d8"></i><i style="left:20px;top:0;width:30px;height:36px;background:#f3f3f3;border:1px solid #e0e0e0"></i><i style="left:22px;top:2px;width:25px;height:1px;background:#d8d8d8"></i><i style="left:22px;top:6px;width:22px;height:3px;background:repeating-linear-gradient(90deg,#e0e0e0 0 4px,transparent 4px 8px)"></i><i style="left:22px;top:21px;width:26px;height:13px;background:#fcfcfc;border:1px solid #e2e2e2"></i></div><div class="tx" style="left:14px;top:102px;width:75px"></div><div class="tx" style="left:62px;top:105px;width:24px"></div><div class="tx" style="left:62px;top:108px;width:24px"></div><div class="tx" style="left:62px;top:111px;width:24px"></div><div class="tx" style="left:35px;top:115px;width:54px"></div><div class="bd"></div></div><div class="pg" style="left:1006px;top:393px"><div class="tx" style="left:63px;top:13px;width:26px"></div><div class="tx" style="left:11px;top:18px;width:78px"></div><div class="tx" style="left:81px;top:23px;width:8px"></div><div class="tx" style="left:40px;top:27px;width:46px"></div><div class="tx" style="left:60px;top:29px;width:26px"></div><div class="tx" style="left:40px;top:31px;width:46px"></div><div class="tx" style="left:75px;top:35px;width:14px"></div><div class="tx" style="left:70px;top:39px;width:19px"></div><div class="tx" style="left:14px;top:43px;width:11px"></div><div class="tx" style="left:14px;top:45px;width:11px"></div><div class="tx" style="left:83px;top:49px;width:6px"></div><div class="ss" style="left:12px;top:53px;width:78px;height:39px;background:#f9f9f9"><i style="left:0;top:0;width:78px;height:3px;background:#3c3c3c"></i><i style="left:0;top:4px;width:12px;height:2px;background:#8cbce6"></i><i style="left:14px;top:4px;width:62px;height:1px;background:#e6e6e6"></i><i style="left:11px;top:8px;width:1px;height:28px;background:#ececec"></i><i style="left:26px;top:9px;width:35px;height:26px;background:#fff;border:1px solid #ececec"></i><i style="left:14px;top:9px;width:9px;height:22px;background:repeating-linear-gradient(#ebebeb 0 1px,transparent 1px 3px)"></i><i style="left:2px;top:8px;width:7px;height:6px;background:repeating-linear-gradient(#e4e4e4 0 1px,transparent 1px 2px)"></i><i style="left:0;top:37px;width:78px;height:1px;background:#d8d8d8"></i></div><div class="tx" style="left:78px;top:95px;width:11px"></div><div class="tx" style="left:15px;top:99px;width:20px"></div><div class="tx" style="left:86px;top:102px;width:3px"></div><div class="tx" style="left:16px;top:106px;width:12px"></div><div class="tx" style="left:47px;top:110px;width:42px"></div><div class="bd"></div></div><div class="pg" style="left:1114px;top:393px"><div class="tx" style="left:81px;top:13px;width:8px"></div><div class="tx" style="left:14px;top:17px;width:22px"></div><div class="ss" style="left:12px;top:21px;width:78px;height:39px;background:#f9f9f9"><i style="left:0;top:0;width:78px;height:3px;background:#3c3c3c"></i><i style="left:0;top:4px;width:12px;height:2px;background:#8cbce6"></i><i style="left:14px;top:4px;width:62px;height:1px;background:#e6e6e6"></i><i style="left:11px;top:8px;width:1px;height:28px;background:#ececec"></i><i style="left:26px;top:9px;width:35px;height:26px;background:#fff;border:1px solid #ececec"></i><i style="left:14px;top:9px;width:9px;height:22px;background:repeating-linear-gradient(#ebebeb 0 1px,transparent 1px 3px)"></i><i style="left:2px;top:8px;width:7px;height:6px;background:repeating-linear-gradient(#e4e4e4 0 1px,transparent 1px 2px)"></i><i style="left:0;top:37px;width:78px;height:1px;background:#d8d8d8"></i></div><div class="tx" style="left:58px;top:63px;width:31px"></div><div class="tx" style="left:78px;top:66px;width:11px"></div><div class="tx" style="left:15px;top:70px;width:12px"></div><div class="ss" style="left:12px;top:74px;width:78px;height:39px;background:#f9f9f9"><i style="left:0;top:0;width:78px;height:3px;background:#3c3c3c"></i><i style="left:0;top:4px;width:12px;height:2px;background:#8cbce6"></i><i style="left:14px;top:4px;width:62px;height:1px;background:#e6e6e6"></i><i style="left:11px;top:8px;width:1px;height:28px;background:#ececec"></i><i style="left:26px;top:9px;width:35px;height:26px;background:#fff;border:1px solid #ececec"></i><i style="left:14px;top:9px;width:9px;height:22px;background:repeating-linear-gradient(#ebebeb 0 1px,transparent 1px 3px)"></i><i style="left:2px;top:8px;width:7px;height:6px;background:repeating-linear-gradient(#e4e4e4 0 1px,transparent 1px 2px)"></i><i style="left:0;top:37px;width:78px;height:1px;background:#d8d8d8"></i></div><div class="tx" style="left:83px;top:116px;width:6px"></div><div class="bd"></div></div><div class="pg" style="left:1222px;top:393px"><div class="tx" style="left:76px;top:13px;width:13px"></div><div class="tx" style="left:12px;top:17px;width:52px"></div><div class="ss" style="left:12px;top:21px;width:78px;height:39px;background:#f9f9f9"><i style="left:0;top:0;width:78px;height:3px;background:#3c3c3c"></i><i style="left:0;top:4px;width:12px;height:2px;background:#8cbce6"></i><i style="left:14px;top:4px;width:62px;height:1px;background:#e6e6e6"></i><i style="left:11px;top:8px;width:1px;height:28px;background:#ececec"></i><i style="left:26px;top:9px;width:35px;height:26px;background:#fff;border:1px solid #ececec"></i><i style="left:14px;top:9px;width:9px;height:22px;background:repeating-linear-gradient(#ebebeb 0 1px,transparent 1px 3px)"></i><i style="left:2px;top:8px;width:7px;height:6px;background:repeating-linear-gradient(#e4e4e4 0 1px,transparent 1px 2px)"></i><i style="left:0;top:37px;width:78px;height:1px;background:#d8d8d8"></i></div><div class="ss" style="left:12px;top:62px;width:78px;height:39px;background:#f9f9f9"><i style="left:0;top:0;width:78px;height:3px;background:#3c3c3c"></i><i style="left:0;top:4px;width:12px;height:2px;background:#8cbce6"></i><i style="left:14px;top:4px;width:62px;height:1px;background:#e6e6e6"></i><i style="left:11px;top:8px;width:1px;height:28px;background:#ececec"></i><i style="left:26px;top:9px;width:35px;height:26px;background:#fff;border:1px solid #ececec"></i><i style="left:14px;top:9px;width:9px;height:22px;background:repeating-linear-gradient(#ebebeb 0 1px,transparent 1px 3px)"></i><i style="left:2px;top:8px;width:7px;height:6px;background:repeating-linear-gradient(#e4e4e4 0 1px,transparent 1px 2px)"></i><i style="left:0;top:37px;width:78px;height:1px;background:#d8d8d8"></i><i style="left:20px;top:0;width:30px;height:36px;background:#f3f3f3;border:1px solid #e0e0e0"></i><i style="left:22px;top:2px;width:25px;height:1px;background:#d8d8d8"></i><i style="left:22px;top:6px;width:22px;height:3px;background:repeating-linear-gradient(90deg,#e0e0e0 0 4px,transparent 4px 8px)"></i><i style="left:22px;top:21px;width:26px;height:13px;background:#fcfcfc;border:1px solid #e2e2e2"></i></div><div class="tx" style="left:76px;top:106px;width:13px"></div><div class="tx" style="left:15px;top:110px;width:15px"></div><div class="tx" style="left:15px;top:112px;width:15px"></div><div class="tx" style="left:15px;top:114px;width:15px"></div><div class="bd"></div></div><div class="pg" style="left:1330px;top:393px"><div class="tx" style="left:14px;top:13px;width:19px"></div><div class="tx" style="left:14px;top:17px;width:28px"></div><div class="tx" style="left:14px;top:21px;width:38px"></div><div class="tx" style="left:70px;top:26px;width:19px"></div><div class="tx" style="left:56px;top:32px;width:33px"></div><div class="tx" style="left:22px;top:36px;width:67px"></div><div class="tx" style="left:29px;top:39px;width:60px"></div><div class="tx" style="left:65px;top:43px;width:24px"></div><div class="tx" style="left:14px;top:47px;width:20px"></div><div class="tx" style="left:30px;top:52px;width:59px"></div><div class="tx" style="left:47px;top:57px;width:42px"></div><div class="tx" style="left:20px;top:60px;width:69px"></div><div class="tx" style="left:14px;top:65px;width:16px"></div><div class="tx" style="left:18px;top:68px;width:71px"></div><div class="tx" style="left:49px;top:72px;width:40px"></div><div class="tx" style="left:19px;top:78px;width:70px"></div><div class="tx" style="left:31px;top:83px;width:58px"></div><div class="tx" style="left:14px;top:86px;width:25px"></div><div class="tx" style="left:27px;top:91px;width:62px"></div><div class="tx" style="left:74px;top:95px;width:15px"></div><div class="tx" style="left:36px;top:100px;width:53px"></div><div class="tx" style="left:27px;top:105px;width:62px"></div><div class="tx" style="left:58px;top:111px;width:31px"></div><div class="bd"></div></div><div class="pg" style="left:1438px;top:393px"><div class="tx" style="left:84px;top:13px;width:5px"></div><div class="ss" style="left:12px;top:17px;width:78px;height:39px;background:#f9f9f9"><i style="left:0;top:0;width:78px;height:3px;background:#3c3c3c"></i><i style="left:0;top:4px;width:12px;height:2px;background:#8cbce6"></i><i style="left:14px;top:4px;width:62px;height:1px;background:#e6e6e6"></i><i style="left:11px;top:8px;width:1px;height:28px;background:#ececec"></i><i style="left:26px;top:9px;width:35px;height:26px;background:#fff;border:1px solid #ececec"></i><i style="left:14px;top:9px;width:9px;height:22px;background:repeating-linear-gradient(#ebebeb 0 1px,transparent 1px 3px)"></i><i style="left:2px;top:8px;width:7px;height:6px;background:repeating-linear-gradient(#e4e4e4 0 1px,transparent 1px 2px)"></i><i style="left:0;top:37px;width:78px;height:1px;background:#d8d8d8"></i><i style="left:20px;top:0;width:30px;height:36px;background:#f3f3f3;border:1px solid #e0e0e0"></i><i style="left:22px;top:2px;width:25px;height:1px;background:#d8d8d8"></i><i style="left:22px;top:6px;width:22px;height:3px;background:repeating-linear-gradient(90deg,#e0e0e0 0 4px,transparent 4px 8px)"></i><i style="left:22px;top:21px;width:26px;height:13px;background:#fcfcfc;border:1px solid #e2e2e2"></i></div><div class="tx" style="left:75px;top:59px;width:14px"></div><div class="ss" style="left:12px;top:62px;width:78px;height:39px;background:#f9f9f9"><i style="left:0;top:0;width:78px;height:3px;background:#3c3c3c"></i><i style="left:0;top:4px;width:12px;height:2px;background:#8cbce6"></i><i style="left:14px;top:4px;width:62px;height:1px;background:#e6e6e6"></i><i style="left:11px;top:8px;width:1px;height:28px;background:#ececec"></i><i style="left:26px;top:9px;width:35px;height:26px;background:#fff;border:1px solid #ececec"></i><i style="left:14px;top:9px;width:9px;height:22px;background:repeating-linear-gradient(#ebebeb 0 1px,transparent 1px 3px)"></i><i style="left:2px;top:8px;width:7px;height:6px;background:repeating-linear-gradient(#e4e4e4 0 1px,transparent 1px 2px)"></i><i style="left:0;top:37px;width:78px;height:1px;background:#d8d8d8"></i></div><div class="bd"></div></div><div class="pg" style="left:1546px;top:393px"><div class="tx" style="left:15px;top:12px;width:73px"></div><div class="tx" style="left:14px;top:16px;width:28px"></div><div class="tx" style="left:14px;top:21px;width:36px"></div><div class="tx" style="left:36px;top:24px;width:52px"></div><div class="tx" style="left:14px;top:29px;width:32px"></div><div class="tx" style="left:64px;top:34px;width:24px"></div><div class="tx" style="left:25px;top:38px;width:63px"></div><div class="tx" style="left:50px;top:42px;width:38px"></div><div class="tx" style="left:76px;top:48px;width:12px"></div><div class="tx" style="left:28px;top:52px;width:60px"></div><div class="tx" style="left:51px;top:56px;width:37px"></div><div class="tx" style="left:16px;top:44px;width:12px;height:2px;background:repeating-linear-gradient(90deg,#c03030 0 3px,rgba(0,0,0,.5) 3px 5px,#c03030 5px 7px,transparent 7px 8px)"></div><div class="ss" style="left:12px;top:58px;width:78px;height:42px"><svg width="78" height="42" viewBox="0 0 78 42" preserveAspectRatio="none" style="position:absolute;left:0;top:0"><defs><linearGradient id="cv" x1="0" x2="1"><stop offset="0" stop-color="#2a4a40"/><stop offset=".3" stop-color="#4a3a2e"/><stop offset=".55" stop-color="#7a5436"/><stop offset=".8" stop-color="#d49a50"/><stop offset="1" stop-color="#b88048"/></linearGradient></defs><rect width="78" height="42" fill="#76707a"/><rect width="7" height="42" fill="#646680"/><path d="M3 42 C5 8 30 2 52 6 C68 9 77 22 77 42 Z" fill="#b09a80"/><path d="M50 6 C66 9 77 22 77 42 H70 C70 28 62 16 50 12 Z" fill="#d0b890"/><path d="M12 42 C14 18 32 12 50 15 C64 18 70 28 70 42 Z" fill="url(#cv)"/><path d="M0 30 C14 26 30 30 78 31 V42 H0 Z" fill="#2e7a62"/><path d="M12 31 C20 24 30 24 36 30 Z" fill="#2a6a58"/><path d="M34 33 C44 29 56 29 66 33 L60 42 H38 Z" fill="#c8a468"/><path d="M0 38 C8 34 14 36 20 42 H0 Z" fill="#7a8aa0"/></svg><i style="left:2px;top:30px;width:18px;height:9px;background:#eaeaea"></i><i style="left:0;top:40px;width:78px;height:2px;background:#cfe0e8"></i></div><div class="tx" style="left:16px;top:104px;width:72px"></div><div class="tx" style="left:37px;top:107px;width:51px"></div><div class="tx" style="left:14px;top:111px;width:40px"></div><div class="tx" style="left:20px;top:115px;width:68px"></div><div class="tx" style="left:54px;top:121px;width:34px"></div><div class="bd"></div></div><div class="pg" style="left:1654px;top:393px"><div class="ss" style="left:12px;top:12px;width:78px;height:41px"><svg width="78" height="41" viewBox="0 0 78 42" preserveAspectRatio="none" style="position:absolute;left:0;top:0"><defs><linearGradient id="cv" x1="0" x2="1"><stop offset="0" stop-color="#2a4a40"/><stop offset=".3" stop-color="#4a3a2e"/><stop offset=".55" stop-color="#7a5436"/><stop offset=".8" stop-color="#d49a50"/><stop offset="1" stop-color="#b88048"/></linearGradient></defs><rect width="78" height="42" fill="#76707a"/><rect width="7" height="42" fill="#646680"/><path d="M3 42 C5 8 30 2 52 6 C68 9 77 22 77 42 Z" fill="#b09a80"/><path d="M50 6 C66 9 77 22 77 42 H70 C70 28 62 16 50 12 Z" fill="#d0b890"/><path d="M12 42 C14 18 32 12 50 15 C64 18 70 28 70 42 Z" fill="url(#cv)"/><path d="M0 30 C14 26 30 30 78 31 V42 H0 Z" fill="#2e7a62"/><path d="M12 31 C20 24 30 24 36 30 Z" fill="#2a6a58"/><path d="M34 33 C44 29 56 29 66 33 L60 42 H38 Z" fill="#c8a468"/><path d="M0 38 C8 34 14 36 20 42 H0 Z" fill="#7a8aa0"/></svg><i style="left:7px;top:6px;width:53px;height:29px;background:#121010"></i><i style="left:0;top:39px;width:78px;height:2px;background:#cfe0e8"></i></div><div class="tx" style="left:52px;top:57px;width:37px"></div><div class="tx" style="left:49px;top:61px;width:40px"></div><div class="tx" style="left:64px;top:66px;width:25px"></div><div class="tx" style="left:54px;top:71px;width:35px"></div><div class="tx" style="left:14px;top:74px;width:16px"></div><div class="ss" style="left:12px;top:77px;width:78px;height:41px"><svg width="78" height="41" viewBox="0 0 78 42" preserveAspectRatio="none" style="position:absolute;left:0;top:0"><defs><linearGradient id="cv" x1="0" x2="1"><stop offset="0" stop-color="#2a4a40"/><stop offset=".3" stop-color="#4a3a2e"/><stop offset=".55" stop-color="#7a5436"/><stop offset=".8" stop-color="#d49a50"/><stop offset="1" stop-color="#b88048"/></linearGradient></defs><rect width="78" height="42" fill="#76707a"/><rect width="7" height="42" fill="#646680"/><path d="M3 42 C5 8 30 2 52 6 C68 9 77 22 77 42 Z" fill="#b09a80"/><path d="M50 6 C66 9 77 22 77 42 H70 C70 28 62 16 50 12 Z" fill="#d0b890"/><path d="M12 42 C14 18 32 12 50 15 C64 18 70 28 70 42 Z" fill="url(#cv)"/><path d="M0 30 C14 26 30 30 78 31 V42 H0 Z" fill="#2e7a62"/><path d="M12 31 C20 24 30 24 36 30 Z" fill="#2a6a58"/><path d="M34 33 C44 29 56 29 66 33 L60 42 H38 Z" fill="#c8a468"/><path d="M0 38 C8 34 14 36 20 42 H0 Z" fill="#7a8aa0"/></svg><i style="left:0;top:39px;width:78px;height:2px;background:#cfe0e8"></i></div><div class="bd"></div></div><div class="pg" style="left:1762px;top:393px"><div class="ln" style="left:12px;top:67px;width:77px;background:#b0b0b0"></div><div class="bd"></div></div><div class="pg" style="left:34px;top:531px"><div class="ln" style="left:57px;top:12px;width:32px;height:3px;background:#f0f020"></div><div class="ln" style="left:58px;top:13px;width:30px;background:#333"></div><div class="ss" style="left:12px;top:16px;width:78px;height:42px"><svg width="78" height="42" viewBox="0 0 78 42" preserveAspectRatio="none" style="position:absolute;left:0;top:0"><defs><linearGradient id="cv" x1="0" x2="1"><stop offset="0" stop-color="#2a4a40"/><stop offset=".3" stop-color="#4a3a2e"/><stop offset=".55" stop-color="#7a5436"/><stop offset=".8" stop-color="#d49a50"/><stop offset="1" stop-color="#b88048"/></linearGradient></defs><rect width="78" height="42" fill="#76707a"/><rect width="7" height="42" fill="#646680"/><path d="M3 42 C5 8 30 2 52 6 C68 9 77 22 77 42 Z" fill="#b09a80"/><path d="M50 6 C66 9 77 22 77 42 H70 C70 28 62 16 50 12 Z" fill="#d0b890"/><path d="M12 42 C14 18 32 12 50 15 C64 18 70 28 70 42 Z" fill="url(#cv)"/><path d="M0 30 C14 26 30 30 78 31 V42 H0 Z" fill="#2e7a62"/><path d="M12 31 C20 24 30 24 36 30 Z" fill="#2a6a58"/><path d="M34 33 C44 29 56 29 66 33 L60 42 H38 Z" fill="#c8a468"/><path d="M0 38 C8 34 14 36 20 42 H0 Z" fill="#7a8aa0"/></svg><i style="left:7px;top:3px;width:64px;height:33px;background:#f7f7f7;border-top:2px solid #e4e4e4"></i><i style="left:10px;top:10px;width:9px;height:21px;background:repeating-linear-gradient(#dcdcdc 0 1px,transparent 1px 3px)"></i><i style="left:35px;top:12px;width:4px;height:3px;background:#7ab0e8"></i><i style="left:0;top:40px;width:78px;height:2px;background:#cfe0e8"></i></div><div class="tx" style="left:80px;top:61px;width:9px"></div><div class="tx" style="left:15px;top:65px;width:11px"></div><div class="tx" style="left:39px;top:69px;width:50px"></div><div class="tx" style="left:73px;top:73px;width:16px"></div><div class="tx" style="left:62px;top:79px;width:27px"></div><div class="tx" style="left:65px;top:83px;width:24px"></div><div class="tx" style="left:75px;top:87px;width:14px"></div><div class="tx" style="left:63px;top:90px;width:26px"></div><div class="tx" style="left:64px;top:93px;width:25px"></div><div class="tx" style="left:36px;top:99px;width:53px"></div><div class="tx" style="left:14px;top:102px;width:16px"></div><div class="tx" style="left:44px;top:107px;width:45px"></div><div class="tx" style="left:14px;top:111px;width:12px"></div><div class="tx" style="left:75px;top:115px;width:14px"></div><div class="bd"></div></div><div class="pg" style="left:142px;top:531px"><div class="tx" style="left:56px;top:13px;width:32px"></div><div class="tx" style="left:73px;top:18px;width:15px"></div><div class="tx" style="left:72px;top:23px;width:16px"></div><div class="tx" style="left:73px;top:28px;width:15px"></div><div class="tx" style="left:57px;top:33px;width:31px"></div><div class="tx" style="left:61px;top:36px;width:27px"></div><div class="tx" style="left:74px;top:40px;width:14px"></div><div class="tx" style="left:75px;top:46px;width:13px"></div><div class="tx" style="left:46px;top:51px;width:42px"></div><div class="tx" style="left:62px;top:56px;width:26px"></div><div class="tx" style="left:74px;top:62px;width:14px"></div><div class="tx" style="left:75px;top:66px;width:13px"></div><div class="tx" style="left:52px;top:70px;width:36px"></div><div class="tx" style="left:74px;top:74px;width:14px"></div><div class="tx" style="left:78px;top:78px;width:10px"></div><div class="tx" style="left:58px;top:83px;width:30px"></div><div class="tx" style="left:58px;top:87px;width:30px"></div><div class="tx" style="left:52px;top:91px;width:36px"></div><div class="tx" style="left:55px;top:96px;width:33px"></div><div class="tx" style="left:54px;top:99px;width:34px"></div><div class="tx" style="left:71px;top:102px;width:17px"></div><div class="tx" style="left:46px;top:106px;width:42px"></div><div class="tx" style="left:75px;top:110px;width:13px"></div><div class="tx" style="left:69px;top:113px;width:19px"></div><div class="bd"></div></div><div class="pg" style="left:250px;top:531px"><div class="tx" style="left:30px;top:13px;width:59px"></div><div class="tx" style="left:50px;top:17px;width:39px"></div><div class="tx" style="left:13px;top:22px;width:44px"></div><div class="ss" style="left:12px;top:26px;width:78px;height:39px;background:#f9f9f9"><i style="left:0;top:0;width:78px;height:3px;background:#3c3c3c"></i><i style="left:0;top:4px;width:12px;height:2px;background:#8cbce6"></i><i style="left:14px;top:4px;width:62px;height:1px;background:#e6e6e6"></i><i style="left:11px;top:8px;width:1px;height:28px;background:#ececec"></i><i style="left:26px;top:9px;width:35px;height:26px;background:#fff;border:1px solid #ececec"></i><i style="left:14px;top:9px;width:9px;height:22px;background:repeating-linear-gradient(#ebebeb 0 1px,transparent 1px 3px)"></i><i style="left:2px;top:8px;width:7px;height:6px;background:repeating-linear-gradient(#e4e4e4 0 1px,transparent 1px 2px)"></i><i style="left:0;top:37px;width:78px;height:1px;background:#d8d8d8"></i></div><div class="tx" style="left:52px;top:68px;width:37px"></div><div class="ss" style="left:12px;top:70px;width:78px;height:39px;background:#f9f9f9"><i style="left:0;top:0;width:78px;height:3px;background:#3c3c3c"></i><i style="left:0;top:4px;width:12px;height:2px;background:#8cbce6"></i><i style="left:14px;top:4px;width:62px;height:1px;background:#e6e6e6"></i><i style="left:11px;top:8px;width:1px;height:28px;background:#ececec"></i><i style="left:26px;top:9px;width:35px;height:26px;background:#fff;border:1px solid #ececec"></i><i style="left:14px;top:9px;width:9px;height:22px;background:repeating-linear-gradient(#ebebeb 0 1px,transparent 1px 3px)"></i><i style="left:2px;top:8px;width:7px;height:6px;background:repeating-linear-gradient(#e4e4e4 0 1px,transparent 1px 2px)"></i><i style="left:0;top:37px;width:78px;height:1px;background:#d8d8d8"></i></div><div class="bd"></div></div><div class="pg" style="left:358px;top:531px"><div class="tx" style="left:75px;top:13px;width:14px"></div><div class="ss" style="left:12px;top:17px;width:78px;height:39px;background:#f9f9f9"><i style="left:0;top:0;width:78px;height:3px;background:#3c3c3c"></i><i style="left:0;top:4px;width:12px;height:2px;background:#8cbce6"></i><i style="left:14px;top:4px;width:62px;height:1px;background:#e6e6e6"></i><i style="left:11px;top:8px;width:1px;height:28px;background:#ececec"></i><i style="left:26px;top:9px;width:35px;height:26px;background:#fff;border:1px solid #ececec"></i><i style="left:14px;top:9px;width:9px;height:22px;background:repeating-linear-gradient(#ebebeb 0 1px,transparent 1px 3px)"></i><i style="left:2px;top:8px;width:7px;height:6px;background:repeating-linear-gradient(#e4e4e4 0 1px,transparent 1px 2px)"></i><i style="left:0;top:37px;width:78px;height:1px;background:#d8d8d8"></i></div><div class="tx" style="left:85px;top:59px;width:4px"></div><div class="ss" style="left:12px;top:62px;width:78px;height:39px;background:#f9f9f9"><i style="left:0;top:0;width:78px;height:3px;background:#3c3c3c"></i><i style="left:0;top:4px;width:12px;height:2px;background:#8cbce6"></i><i style="left:14px;top:4px;width:62px;height:1px;background:#e6e6e6"></i><i style="left:11px;top:8px;width:1px;height:28px;background:#ececec"></i><i style="left:26px;top:9px;width:35px;height:26px;background:#fff;border:1px solid #ececec"></i><i style="left:14px;top:9px;width:9px;height:22px;background:repeating-linear-gradient(#ebebeb 0 1px,transparent 1px 3px)"></i><i style="left:2px;top:8px;width:7px;height:6px;background:repeating-linear-gradient(#e4e4e4 0 1px,transparent 1px 2px)"></i><i style="left:0;top:37px;width:78px;height:1px;background:#d8d8d8"></i></div><div class="tx" style="left:46px;top:104px;width:43px"></div><div class="bd"></div></div><div class="pg" style="left:466px;top:531px"><div class="tx" style="left:73px;top:13px;width:16px"></div><div class="tx" style="left:12px;top:17px;width:15px"></div><div class="ss" style="left:12px;top:21px;width:78px;height:39px;background:#f9f9f9"><i style="left:0;top:0;width:78px;height:3px;background:#3c3c3c"></i><i style="left:0;top:4px;width:12px;height:2px;background:#8cbce6"></i><i style="left:14px;top:4px;width:62px;height:1px;background:#e6e6e6"></i><i style="left:11px;top:8px;width:1px;height:28px;background:#ececec"></i><i style="left:26px;top:9px;width:35px;height:26px;background:#fff;border:1px solid #ececec"></i><i style="left:14px;top:9px;width:9px;height:22px;background:repeating-linear-gradient(#ebebeb 0 1px,transparent 1px 3px)"></i><i style="left:2px;top:8px;width:7px;height:6px;background:repeating-linear-gradient(#e4e4e4 0 1px,transparent 1px 2px)"></i><i style="left:0;top:37px;width:78px;height:1px;background:#d8d8d8"></i></div><div class="ss" style="left:12px;top:66px;width:78px;height:39px;background:#f9f9f9"><i style="left:0;top:0;width:78px;height:3px;background:#3c3c3c"></i><i style="left:0;top:4px;width:12px;height:2px;background:#8cbce6"></i><i style="left:14px;top:4px;width:62px;height:1px;background:#e6e6e6"></i><i style="left:11px;top:8px;width:1px;height:28px;background:#ececec"></i><i style="left:26px;top:9px;width:35px;height:26px;background:#fff;border:1px solid #ececec"></i><i style="left:14px;top:9px;width:9px;height:22px;background:repeating-linear-gradient(#ebebeb 0 1px,transparent 1px 3px)"></i><i style="left:2px;top:8px;width:7px;height:6px;background:repeating-linear-gradient(#e4e4e4 0 1px,transparent 1px 2px)"></i><i style="left:0;top:37px;width:78px;height:1px;background:#d8d8d8"></i></div><div class="bd"></div></div><div class="pg" style="left:574px;top:531px"><div class="tx" style="left:84px;top:13px;width:5px"></div><div class="tx" style="left:12px;top:17px;width:54px"></div><div class="ss" style="left:12px;top:21px;width:78px;height:39px;background:#f9f9f9"><i style="left:0;top:0;width:78px;height:3px;background:#3c3c3c"></i><i style="left:0;top:4px;width:12px;height:2px;background:#8cbce6"></i><i style="left:14px;top:4px;width:62px;height:1px;background:#e6e6e6"></i><i style="left:11px;top:8px;width:1px;height:28px;background:#ececec"></i><i style="left:26px;top:9px;width:35px;height:26px;background:#fff;border:1px solid #ececec"></i><i style="left:14px;top:9px;width:9px;height:22px;background:repeating-linear-gradient(#ebebeb 0 1px,transparent 1px 3px)"></i><i style="left:2px;top:8px;width:7px;height:6px;background:repeating-linear-gradient(#e4e4e4 0 1px,transparent 1px 2px)"></i><i style="left:0;top:37px;width:78px;height:1px;background:#d8d8d8"></i></div><div class="tx" style="left:74px;top:62px;width:15px"></div><div class="tx" style="left:15px;top:66px;width:45px"></div><div class="tx" style="left:35px;top:70px;width:54px"></div><div class="tx" style="left:80px;top:74px;width:9px"></div><div class="tx" style="left:12px;top:78px;width:14px"></div><div class="ss" style="left:12px;top:82px;width:78px;height:38px;background:#f9f9f9"><i style="left:0;top:0;width:78px;height:3px;background:#3c3c3c"></i><i style="left:0;top:4px;width:12px;height:2px;background:#8cbce6"></i><i style="left:14px;top:4px;width:62px;height:1px;background:#e6e6e6"></i><i style="left:11px;top:8px;width:1px;height:27px;background:#ececec"></i><i style="left:26px;top:9px;width:35px;height:25px;background:#fff;border:1px solid #ececec"></i><i style="left:14px;top:9px;width:9px;height:22px;background:repeating-linear-gradient(#ebebeb 0 1px,transparent 1px 3px)"></i><i style="left:2px;top:8px;width:7px;height:6px;background:repeating-linear-gradient(#e4e4e4 0 1px,transparent 1px 2px)"></i><i style="left:0;top:36px;width:78px;height:1px;background:#d8d8d8"></i></div><div class="bd"></div></div><div class="pg" style="left:682px;top:531px"><div class="ss" style="left:12px;top:13px;width:78px;height:39px;background:#f9f9f9"><i style="left:0;top:0;width:78px;height:3px;background:#3c3c3c"></i><i style="left:0;top:4px;width:12px;height:2px;background:#8cbce6"></i><i style="left:14px;top:4px;width:62px;height:1px;background:#e6e6e6"></i><i style="left:11px;top:8px;width:1px;height:28px;background:#ececec"></i><i style="left:26px;top:9px;width:35px;height:26px;background:#fff;border:1px solid #ececec"></i><i style="left:14px;top:9px;width:9px;height:22px;background:repeating-linear-gradient(#ebebeb 0 1px,transparent 1px 3px)"></i><i style="left:2px;top:8px;width:7px;height:6px;background:repeating-linear-gradient(#e4e4e4 0 1px,transparent 1px 2px)"></i><i style="left:0;top:37px;width:78px;height:1px;background:#d8d8d8"></i><i style="left:20px;top:0;width:30px;height:36px;background:#f3f3f3;border:1px solid #e0e0e0"></i><i style="left:22px;top:2px;width:25px;height:1px;background:#d8d8d8"></i><i style="left:22px;top:6px;width:22px;height:3px;background:repeating-linear-gradient(90deg,#e0e0e0 0 4px,transparent 4px 8px)"></i><i style="left:22px;top:21px;width:26px;height:13px;background:#fcfcfc;border:1px solid #e2e2e2"></i></div><div class="tx" style="left:66px;top:55px;width:23px"></div><div class="ss" style="left:12px;top:59px;width:78px;height:38px;background:#f9f9f9"><i style="left:0;top:0;width:78px;height:3px;background:#3c3c3c"></i><i style="left:0;top:4px;width:12px;height:2px;background:#8cbce6"></i><i style="left:14px;top:4px;width:62px;height:1px;background:#e6e6e6"></i><i style="left:11px;top:8px;width:1px;height:27px;background:#ececec"></i><i style="left:26px;top:9px;width:35px;height:25px;background:#fff;border:1px solid #ececec"></i><i style="left:14px;top:9px;width:9px;height:22px;background:repeating-linear-gradient(#ebebeb 0 1px,transparent 1px 3px)"></i><i style="left:2px;top:8px;width:7px;height:6px;background:repeating-linear-gradient(#e4e4e4 0 1px,transparent 1px 2px)"></i><i style="left:0;top:36px;width:78px;height:1px;background:#d8d8d8"></i><i style="left:20px;top:0;width:30px;height:35px;background:#f3f3f3;border:1px solid #e0e0e0"></i><i style="left:22px;top:2px;width:25px;height:1px;background:#d8d8d8"></i><i style="left:22px;top:6px;width:22px;height:3px;background:repeating-linear-gradient(90deg,#e0e0e0 0 4px,transparent 4px 8px)"></i><i style="left:22px;top:20px;width:26px;height:13px;background:#fcfcfc;border:1px solid #e2e2e2"></i></div><div class="tx" style="left:75px;top:101px;width:14px"></div><div class="bd"></div></div><div class="pg" style="left:790px;top:531px"><div class="ss" style="left:12px;top:13px;width:78px;height:39px;background:#f9f9f9"><i style="left:0;top:0;width:78px;height:3px;background:#3c3c3c"></i><i style="left:0;top:4px;width:12px;height:2px;background:#8cbce6"></i><i style="left:14px;top:4px;width:62px;height:1px;background:#e6e6e6"></i><i style="left:11px;top:8px;width:1px;height:28px;background:#ececec"></i><i style="left:26px;top:9px;width:35px;height:26px;background:#fff;border:1px solid #ececec"></i><i style="left:14px;top:9px;width:9px;height:22px;background:repeating-linear-gradient(#ebebeb 0 1px,transparent 1px 3px)"></i><i style="left:2px;top:8px;width:7px;height:6px;background:repeating-linear-gradient(#e4e4e4 0 1px,transparent 1px 2px)"></i><i style="left:0;top:37px;width:78px;height:1px;background:#d8d8d8"></i></div><div class="tx" style="left:54px;top:55px;width:35px"></div><div class="tx" style="left:15px;top:59px;width:14px;height:2px;background:repeating-linear-gradient(90deg,#c03030 0 3px,rgba(0,0,0,.5) 3px 5px,#c03030 5px 7px,transparent 7px 8px)"></div><div class="ss" style="left:12px;top:62px;width:78px;height:42px"><svg width="78" height="42" viewBox="0 0 78 42" preserveAspectRatio="none" style="position:absolute;left:0;top:0"><defs><linearGradient id="cv" x1="0" x2="1"><stop offset="0" stop-color="#2a4a40"/><stop offset=".3" stop-color="#4a3a2e"/><stop offset=".55" stop-color="#7a5436"/><stop offset=".8" stop-color="#d49a50"/><stop offset="1" stop-color="#b88048"/></linearGradient></defs><rect width="78" height="42" fill="#76707a"/><rect width="7" height="42" fill="#646680"/><path d="M3 42 C5 8 30 2 52 6 C68 9 77 22 77 42 Z" fill="#b09a80"/><path d="M50 6 C66 9 77 22 77 42 H70 C70 28 62 16 50 12 Z" fill="#d0b890"/><path d="M12 42 C14 18 32 12 50 15 C64 18 70 28 70 42 Z" fill="url(#cv)"/><path d="M0 30 C14 26 30 30 78 31 V42 H0 Z" fill="#2e7a62"/><path d="M12 31 C20 24 30 24 36 30 Z" fill="#2a6a58"/><path d="M34 33 C44 29 56 29 66 33 L60 42 H38 Z" fill="#c8a468"/><path d="M0 38 C8 34 14 36 20 42 H0 Z" fill="#7a8aa0"/></svg><i style="left:2px;top:30px;width:18px;height:9px;background:#eaeaea"></i><i style="left:0;top:40px;width:78px;height:2px;background:#cfe0e8"></i></div><div class="bd"></div></div><div class="pg" style="left:898px;top:531px"><div class="ss" style="left:12px;top:12px;width:78px;height:41px"><svg width="78" height="41" viewBox="0 0 78 42" preserveAspectRatio="none" style="position:absolute;left:0;top:0"><defs><linearGradient id="cv" x1="0" x2="1"><stop offset="0" stop-color="#2a4a40"/><stop offset=".3" stop-color="#4a3a2e"/><stop offset=".55" stop-color="#7a5436"/><stop offset=".8" stop-color="#d49a50"/><stop offset="1" stop-color="#b88048"/></linearGradient></defs><rect width="78" height="42" fill="#76707a"/><rect width="7" height="42" fill="#646680"/><path d="M3 42 C5 8 30 2 52 6 C68 9 77 22 77 42 Z" fill="#b09a80"/><path d="M50 6 C66 9 77 22 77 42 H70 C70 28 62 16 50 12 Z" fill="#d0b890"/><path d="M12 42 C14 18 32 12 50 15 C64 18 70 28 70 42 Z" fill="url(#cv)"/><path d="M0 30 C14 26 30 30 78 31 V42 H0 Z" fill="#2e7a62"/><path d="M12 31 C20 24 30 24 36 30 Z" fill="#2a6a58"/><path d="M34 33 C44 29 56 29 66 33 L60 42 H38 Z" fill="#c8a468"/><path d="M0 38 C8 34 14 36 20 42 H0 Z" fill="#7a8aa0"/></svg><i style="left:7px;top:6px;width:53px;height:29px;background:#121010"></i><i style="left:0;top:39px;width:78px;height:2px;background:#cfe0e8"></i></div><div class="tx" style="left:34px;top:57px;width:55px"></div><div class="ss" style="left:12px;top:60px;width:78px;height:42px"><svg width="78" height="42" viewBox="0 0 78 42" preserveAspectRatio="none" style="position:absolute;left:0;top:0"><defs><linearGradient id="cv" x1="0" x2="1"><stop offset="0" stop-color="#2a4a40"/><stop offset=".3" stop-color="#4a3a2e"/><stop offset=".55" stop-color="#7a5436"/><stop offset=".8" stop-color="#d49a50"/><stop offset="1" stop-color="#b88048"/></linearGradient></defs><rect width="78" height="42" fill="#76707a"/><rect width="7" height="42" fill="#646680"/><path d="M3 42 C5 8 30 2 52 6 C68 9 77 22 77 42 Z" fill="#b09a80"/><path d="M50 6 C66 9 77 22 77 42 H70 C70 28 62 16 50 12 Z" fill="#d0b890"/><path d="M12 42 C14 18 32 12 50 15 C64 18 70 28 70 42 Z" fill="url(#cv)"/><path d="M0 30 C14 26 30 30 78 31 V42 H0 Z" fill="#2e7a62"/><path d="M12 31 C20 24 30 24 36 30 Z" fill="#2a6a58"/><path d="M34 33 C44 29 56 29 66 33 L60 42 H38 Z" fill="#c8a468"/><path d="M0 38 C8 34 14 36 20 42 H0 Z" fill="#7a8aa0"/></svg><i style="left:7px;top:3px;width:64px;height:33px;background:#f7f7f7;border-top:2px solid #e4e4e4"></i><i style="left:10px;top:10px;width:9px;height:21px;background:repeating-linear-gradient(#dcdcdc 0 1px,transparent 1px 3px)"></i><i style="left:35px;top:12px;width:4px;height:3px;background:#7ab0e8"></i><i style="left:0;top:40px;width:78px;height:2px;background:#cfe0e8"></i></div><div class="tx" style="left:67px;top:105px;width:22px"></div><div class="bd"></div></div><div class="pg" style="left:1006px;top:531px"><div class="ln" style="left:12px;top:63px;width:77px;background:#b0b0b0"></div><div class="bd"></div></div><div class="pg" style="left:1114px;top:531px"><div class="ss" style="left:12px;top:12px;width:78px;height:41px"><svg width="78" height="41" viewBox="0 0 78 42" preserveAspectRatio="none" style="position:absolute;left:0;top:0"><defs><linearGradient id="sn" x1="0" y1="0" x2="0" y2="1"><stop offset="0" stop-color="#eab890"/><stop offset=".38" stop-color="#eca070"/><stop offset=".48" stop-color="#e88a50"/><stop offset=".56" stop-color="#eaa878"/><stop offset="1" stop-color="#dc9a7c"/></linearGradient></defs><rect width="78" height="42" fill="url(#sn)"/><path d="M50 12 L58 6 L66 12 Z M52 12 H64 V19 H52 Z" fill="#5e3a30"/><rect x="36" y="17" width="42" height="4" fill="#6a4636" opacity=".85"/><path d="M52 21 H64 V28 H52 Z M50 28 L58 34 L66 28 Z" fill="#7a5040" opacity=".6"/></svg><i style="left:7px;top:3px;width:64px;height:32px;background:#f7f7f7;border-top:2px solid #e4e4e4"></i><i style="left:10px;top:10px;width:9px;height:20px;background:repeating-linear-gradient(#dcdcdc 0 1px,transparent 1px 3px)"></i><i style="left:35px;top:12px;width:4px;height:3px;background:#7ab0e8"></i><i style="left:0;top:39px;width:78px;height:2px;background:#cfe0e8"></i></div><div class="ln" style="left:12px;top:55px;width:78px;height:3px;background:#f0f020"></div><div class="ln" style="left:13px;top:56px;width:76px;background:#333"></div><div class="tx" style="left:54px;top:61px;width:34px"></div><div class="tx" style="left:39px;top:65px;width:49px"></div><div class="tx" style="left:34px;top:69px;width:54px"></div><div class="tx" style="left:36px;top:72px;width:52px"></div><div class="tx" style="left:33px;top:78px;width:55px"></div><div class="tx" style="left:51px;top:83px;width:37px"></div><div class="tx" style="left:61px;top:87px;width:27px"></div><div class="tx" style="left:67px;top:91px;width:21px"></div><div class="tx" style="left:44px;top:94px;width:44px"></div><div class="tx" style="left:52px;top:99px;width:36px"></div><div class="tx" style="left:36px;top:103px;width:52px"></div><div class="bd"></div></div><div class="pg" style="left:1222px;top:531px"><div class="tx" style="left:76px;top:13px;width:12px"></div><div class="tx" style="left:76px;top:19px;width:12px"></div><div class="tx" style="left:39px;top:23px;width:49px"></div><div class="tx" style="left:72px;top:27px;width:16px"></div><div class="tx" style="left:64px;top:31px;width:24px"></div><div class="tx" style="left:52px;top:35px;width:36px"></div><div class="tx" style="left:45px;top:40px;width:43px"></div><div class="tx" style="left:62px;top:45px;width:26px"></div><div class="tx" style="left:73px;top:50px;width:15px"></div><div class="tx" style="left:31px;top:54px;width:57px"></div><div class="tx" style="left:78px;top:58px;width:10px"></div><div class="tx" style="left:52px;top:61px;width:36px"></div><div class="tx" style="left:75px;top:67px;width:13px"></div><div class="tx" style="left:38px;top:72px;width:50px"></div><div class="tx" style="left:40px;top:76px;width:48px"></div><div class="tx" style="left:68px;top:82px;width:20px"></div><div class="tx" style="left:44px;top:86px;width:44px"></div><div class="bd"></div></div><div class="pg" style="left:1330px;top:531px"><div class="tx" style="left:30px;top:13px;width:59px"></div><div class="tx" style="left:50px;top:17px;width:39px"></div><div class="tx" style="left:11px;top:22px;width:46px"></div><div class="ss" style="left:12px;top:26px;width:78px;height:39px;background:#f9f9f9"><i style="left:0;top:0;width:78px;height:3px;background:#3c3c3c"></i><i style="left:0;top:4px;width:12px;height:2px;background:#8cbce6"></i><i style="left:14px;top:4px;width:62px;height:1px;background:#e6e6e6"></i><i style="left:11px;top:8px;width:1px;height:28px;background:#ececec"></i><i style="left:26px;top:9px;width:35px;height:26px;background:#fff;border:1px solid #ececec"></i><i style="left:14px;top:9px;width:9px;height:22px;background:repeating-linear-gradient(#ebebeb 0 1px,transparent 1px 3px)"></i><i style="left:2px;top:8px;width:7px;height:6px;background:repeating-linear-gradient(#e4e4e4 0 1px,transparent 1px 2px)"></i><i style="left:0;top:37px;width:78px;height:1px;background:#d8d8d8"></i></div><div class="tx" style="left:49px;top:68px;width:40px"></div><div class="ss" style="left:12px;top:72px;width:78px;height:39px;background:#f9f9f9"><i style="left:0;top:0;width:78px;height:3px;background:#3c3c3c"></i><i style="left:0;top:4px;width:12px;height:2px;background:#8cbce6"></i><i style="left:14px;top:4px;width:62px;height:1px;background:#e6e6e6"></i><i style="left:11px;top:8px;width:1px;height:28px;background:#ececec"></i><i style="left:26px;top:9px;width:35px;height:26px;background:#fff;border:1px solid #ececec"></i><i style="left:14px;top:9px;width:9px;height:22px;background:repeating-linear-gradient(#ebebeb 0 1px,transparent 1px 3px)"></i><i style="left:2px;top:8px;width:7px;height:6px;background:repeating-linear-gradient(#e4e4e4 0 1px,transparent 1px 2px)"></i><i style="left:0;top:37px;width:78px;height:1px;background:#d8d8d8"></i></div><div class="bd"></div></div><div class="pg" style="left:1438px;top:531px"><div class="tx" style="left:72px;top:13px;width:17px"></div><div class="ss" style="left:12px;top:17px;width:78px;height:39px;background:#f9f9f9"><i style="left:0;top:0;width:78px;height:3px;background:#3c3c3c"></i><i style="left:0;top:4px;width:12px;height:2px;background:#8cbce6"></i><i style="left:14px;top:4px;width:62px;height:1px;background:#e6e6e6"></i><i style="left:11px;top:8px;width:1px;height:28px;background:#ececec"></i><i style="left:26px;top:9px;width:35px;height:26px;background:#fff;border:1px solid #ececec"></i><i style="left:14px;top:9px;width:9px;height:22px;background:repeating-linear-gradient(#ebebeb 0 1px,transparent 1px 3px)"></i><i style="left:2px;top:8px;width:7px;height:6px;background:repeating-linear-gradient(#e4e4e4 0 1px,transparent 1px 2px)"></i><i style="left:0;top:37px;width:78px;height:1px;background:#d8d8d8"></i></div><div class="tx" style="left:85px;top:59px;width:4px"></div><div class="ss" style="left:12px;top:62px;width:78px;height:39px;background:#f9f9f9"><i style="left:0;top:0;width:78px;height:3px;background:#3c3c3c"></i><i style="left:0;top:4px;width:12px;height:2px;background:#8cbce6"></i><i style="left:14px;top:4px;width:62px;height:1px;background:#e6e6e6"></i><i style="left:11px;top:8px;width:1px;height:28px;background:#ececec"></i><i style="left:26px;top:9px;width:35px;height:26px;background:#fff;border:1px solid #ececec"></i><i style="left:14px;top:9px;width:9px;height:22px;background:repeating-linear-gradient(#ebebeb 0 1px,transparent 1px 3px)"></i><i style="left:2px;top:8px;width:7px;height:6px;background:repeating-linear-gradient(#e4e4e4 0 1px,transparent 1px 2px)"></i><i style="left:0;top:37px;width:78px;height:1px;background:#d8d8d8"></i></div><div class="tx" style="left:46px;top:104px;width:43px"></div><div class="bd"></div></div><div class="pg" style="left:1546px;top:531px"><div class="tx" style="left:72px;top:13px;width:17px"></div><div class="tx" style="left:12px;top:17px;width:12px"></div><div class="ss" style="left:12px;top:21px;width:78px;height:39px;background:#f9f9f9"><i style="left:0;top:0;width:78px;height:3px;background:#3c3c3c"></i><i style="left:0;top:4px;width:12px;height:2px;background:#8cbce6"></i><i style="left:14px;top:4px;width:62px;height:1px;background:#e6e6e6"></i><i style="left:11px;top:8px;width:1px;height:28px;background:#ececec"></i><i style="left:26px;top:9px;width:35px;height:26px;background:#fff;border:1px solid #ececec"></i><i style="left:14px;top:9px;width:9px;height:22px;background:repeating-linear-gradient(#ebebeb 0 1px,transparent 1px 3px)"></i><i style="left:2px;top:8px;width:7px;height:6px;background:repeating-linear-gradient(#e4e4e4 0 1px,transparent 1px 2px)"></i><i style="left:0;top:37px;width:78px;height:1px;background:#d8d8d8"></i></div><div class="ss" style="left:12px;top:66px;width:78px;height:39px;background:#f9f9f9"><i style="left:0;top:0;width:78px;height:3px;background:#3c3c3c"></i><i style="left:0;top:4px;width:12px;height:2px;background:#8cbce6"></i><i style="left:14px;top:4px;width:62px;height:1px;background:#e6e6e6"></i><i style="left:11px;top:8px;width:1px;height:28px;background:#ececec"></i><i style="left:26px;top:9px;width:35px;height:26px;background:#fff;border:1px solid #ececec"></i><i style="left:14px;top:9px;width:9px;height:22px;background:repeating-linear-gradient(#ebebeb 0 1px,transparent 1px 3px)"></i><i style="left:2px;top:8px;width:7px;height:6px;background:repeating-linear-gradient(#e4e4e4 0 1px,transparent 1px 2px)"></i><i style="left:0;top:37px;width:78px;height:1px;background:#d8d8d8"></i></div><div class="bd"></div></div><div class="pg" style="left:1654px;top:531px"><div class="tx" style="left:84px;top:13px;width:5px"></div><div class="tx" style="left:12px;top:17px;width:77px"></div><div class="ss" style="left:12px;top:21px;width:78px;height:39px;background:#f9f9f9"><i style="left:0;top:0;width:78px;height:3px;background:#3c3c3c"></i><i style="left:0;top:4px;width:12px;height:2px;background:#8cbce6"></i><i style="left:14px;top:4px;width:62px;height:1px;background:#e6e6e6"></i><i style="left:11px;top:8px;width:1px;height:28px;background:#ececec"></i><i style="left:26px;top:9px;width:35px;height:26px;background:#fff;border:1px solid #ececec"></i><i style="left:14px;top:9px;width:9px;height:22px;background:repeating-linear-gradient(#ebebeb 0 1px,transparent 1px 3px)"></i><i style="left:2px;top:8px;width:7px;height:6px;background:repeating-linear-gradient(#e4e4e4 0 1px,transparent 1px 2px)"></i><i style="left:0;top:37px;width:78px;height:1px;background:#d8d8d8"></i></div><div class="tx" style="left:15px;top:63px;width:74px"></div><div class="tx" style="left:34px;top:66px;width:55px"></div><div class="tx" style="left:66px;top:71px;width:23px"></div><div class="tx" style="left:55px;top:74px;width:34px"></div><div class="tx" style="left:47px;top:79px;width:42px"></div><div class="tx" style="left:54px;top:84px;width:35px"></div><div class="tx" style="left:41px;top:89px;width:48px"></div><div class="tx" style="left:75px;top:94px;width:14px"></div><div class="tx" style="left:37px;top:98px;width:52px"></div><div class="tx" style="left:74px;top:104px;width:15px"></div><div class="tx" style="left:32px;top:110px;width:57px"></div><div class="bd"></div></div><div class="pg" style="left:1762px;top:531px"><div class="tx" style="left:72px;top:13px;width:17px"></div><div class="ss" style="left:12px;top:17px;width:78px;height:39px;background:#f9f9f9"><i style="left:0;top:0;width:78px;height:3px;background:#3c3c3c"></i><i style="left:0;top:4px;width:12px;height:2px;background:#8cbce6"></i><i style="left:14px;top:4px;width:62px;height:1px;background:#e6e6e6"></i><i style="left:11px;top:8px;width:1px;height:28px;background:#ececec"></i><i style="left:26px;top:9px;width:35px;height:26px;background:#fff;border:1px solid #ececec"></i><i style="left:14px;top:9px;width:9px;height:22px;background:repeating-linear-gradient(#ebebeb 0 1px,transparent 1px 3px)"></i><i style="left:2px;top:8px;width:7px;height:6px;background:repeating-linear-gradient(#e4e4e4 0 1px,transparent 1px 2px)"></i><i style="left:0;top:37px;width:78px;height:1px;background:#d8d8d8"></i></div><div class="tx" style="left:58px;top:60px;width:31px"></div><div class="tx" style="left:15px;top:64px;width:16px;height:2px;background:repeating-linear-gradient(90deg,#c03030 0 3px,rgba(0,0,0,.5) 3px 5px,#c03030 5px 7px,transparent 7px 8px)"></div><div class="ss" style="left:12px;top:67px;width:78px;height:42px"><svg width="78" height="42" viewBox="0 0 78 42" preserveAspectRatio="none" style="position:absolute;left:0;top:0"><defs><linearGradient id="sn" x1="0" y1="0" x2="0" y2="1"><stop offset="0" stop-color="#eab890"/><stop offset=".38" stop-color="#eca070"/><stop offset=".48" stop-color="#e88a50"/><stop offset=".56" stop-color="#eaa878"/><stop offset="1" stop-color="#dc9a7c"/></linearGradient></defs><rect width="78" height="42" fill="url(#sn)"/><path d="M50 12 L58 6 L66 12 Z M52 12 H64 V19 H52 Z" fill="#5e3a30"/><rect x="36" y="17" width="42" height="4" fill="#6a4636" opacity=".85"/><path d="M52 21 H64 V28 H52 Z M50 28 L58 34 L66 28 Z" fill="#7a5040" opacity=".6"/></svg><i style="left:2px;top:30px;width:18px;height:9px;background:#eaeaea"></i><i style="left:0;top:40px;width:78px;height:2px;background:#cfe0e8"></i></div><div class="bd"></div></div><div class="pg" style="left:88px;top:669px"><div class="ss" style="left:12px;top:12px;width:78px;height:41px"><svg width="78" height="41" viewBox="0 0 78 42" preserveAspectRatio="none" style="position:absolute;left:0;top:0"><defs><linearGradient id="sn" x1="0" y1="0" x2="0" y2="1"><stop offset="0" stop-color="#eab890"/><stop offset=".38" stop-color="#eca070"/><stop offset=".48" stop-color="#e88a50"/><stop offset=".56" stop-color="#eaa878"/><stop offset="1" stop-color="#dc9a7c"/></linearGradient></defs><rect width="78" height="42" fill="url(#sn)"/><path d="M50 12 L58 6 L66 12 Z M52 12 H64 V19 H52 Z" fill="#5e3a30"/><rect x="36" y="17" width="42" height="4" fill="#6a4636" opacity=".85"/><path d="M52 21 H64 V28 H52 Z M50 28 L58 34 L66 28 Z" fill="#7a5040" opacity=".6"/></svg><i style="left:7px;top:6px;width:53px;height:29px;background:#121010"></i><i style="left:0;top:39px;width:78px;height:2px;background:#cfe0e8"></i></div><div class="tx" style="left:45px;top:57px;width:44px"></div><div class="ss" style="left:12px;top:60px;width:78px;height:42px"><svg width="78" height="42" viewBox="0 0 78 42" preserveAspectRatio="none" style="position:absolute;left:0;top:0"><defs><linearGradient id="sn" x1="0" y1="0" x2="0" y2="1"><stop offset="0" stop-color="#eab890"/><stop offset=".38" stop-color="#eca070"/><stop offset=".48" stop-color="#e88a50"/><stop offset=".56" stop-color="#eaa878"/><stop offset="1" stop-color="#dc9a7c"/></linearGradient></defs><rect width="78" height="42" fill="url(#sn)"/><path d="M50 12 L58 6 L66 12 Z M52 12 H64 V19 H52 Z" fill="#5e3a30"/><rect x="36" y="17" width="42" height="4" fill="#6a4636" opacity=".85"/><path d="M52 21 H64 V28 H52 Z M50 28 L58 34 L66 28 Z" fill="#7a5040" opacity=".6"/></svg><i style="left:7px;top:3px;width:64px;height:33px;background:#f7f7f7;border-top:2px solid #e4e4e4"></i><i style="left:10px;top:10px;width:9px;height:21px;background:repeating-linear-gradient(#dcdcdc 0 1px,transparent 1px 3px)"></i><i style="left:35px;top:12px;width:4px;height:3px;background:#7ab0e8"></i><i style="left:0;top:40px;width:78px;height:2px;background:#cfe0e8"></i></div><div class="bd"></div></div><div class="pg" style="left:196px;top:669px"><div class="ss" style="left:12px;top:12px;width:78px;height:43px"><svg width="78" height="43" viewBox="0 0 78 42" preserveAspectRatio="none" style="position:absolute;left:0;top:0"><defs><linearGradient id="sn" x1="0" y1="0" x2="0" y2="1"><stop offset="0" stop-color="#eab890"/><stop offset=".38" stop-color="#eca070"/><stop offset=".48" stop-color="#e88a50"/><stop offset=".56" stop-color="#eaa878"/><stop offset="1" stop-color="#dc9a7c"/></linearGradient></defs><rect width="78" height="42" fill="url(#sn)"/><path d="M50 12 L58 6 L66 12 Z M52 12 H64 V19 H52 Z" fill="#5e3a30"/><rect x="36" y="17" width="42" height="4" fill="#6a4636" opacity=".85"/><path d="M52 21 H64 V28 H52 Z M50 28 L58 34 L66 28 Z" fill="#7a5040" opacity=".6"/></svg><i style="left:7px;top:3px;width:64px;height:34px;background:#f7f7f7;border-top:2px solid #e4e4e4"></i><i style="left:10px;top:10px;width:9px;height:21px;background:repeating-linear-gradient(#dcdcdc 0 1px,transparent 1px 3px)"></i><i style="left:35px;top:12px;width:4px;height:3px;background:#7ab0e8"></i><i style="left:0;top:41px;width:78px;height:2px;background:#cfe0e8"></i></div><div class="tx" style="left:75px;top:58px;width:14px"></div><div class="tx" style="left:15px;top:62px;width:28px"></div><div class="tx" style="left:26px;top:65px;width:63px"></div><div class="tx" style="left:26px;top:69px;width:63px"></div><div class="ss" style="left:12px;top:71px;width:78px;height:42px"><svg width="78" height="42" viewBox="0 0 78 42" preserveAspectRatio="none" style="position:absolute;left:0;top:0"><defs><linearGradient id="sn" x1="0" y1="0" x2="0" y2="1"><stop offset="0" stop-color="#eab890"/><stop offset=".38" stop-color="#eca070"/><stop offset=".48" stop-color="#e88a50"/><stop offset=".56" stop-color="#eaa878"/><stop offset="1" stop-color="#dc9a7c"/></linearGradient></defs><rect width="78" height="42" fill="url(#sn)"/><path d="M50 12 L58 6 L66 12 Z M52 12 H64 V19 H52 Z" fill="#5e3a30"/><rect x="36" y="17" width="42" height="4" fill="#6a4636" opacity=".85"/><path d="M52 21 H64 V28 H52 Z M50 28 L58 34 L66 28 Z" fill="#7a5040" opacity=".6"/></svg><i style="left:7px;top:3px;width:64px;height:33px;background:#f7f7f7;border-top:2px solid #e4e4e4"></i><i style="left:10px;top:10px;width:9px;height:21px;background:repeating-linear-gradient(#dcdcdc 0 1px,transparent 1px 3px)"></i><i style="left:35px;top:12px;width:4px;height:3px;background:#7ab0e8"></i><i style="left:0;top:40px;width:78px;height:2px;background:#cfe0e8"></i></div><div class="bd"></div></div><div class="pg" style="left:304px;top:669px"><div class="ln" style="left:12px;top:60px;width:77px;background:#b0b0b0"></div><div class="bd"></div></div><div class="pg" style="left:412px;top:669px"><div class="ln" style="left:83px;top:12px;width:6px;height:3px;background:#f0f020"></div><div class="ln" style="left:84px;top:13px;width:4px;background:#333"></div><div class="ln" style="left:15px;top:16px;width:18px;height:3px;background:#f0f020"></div><div class="ln" style="left:16px;top:17px;width:16px;background:#333"></div><div class="ss" style="left:12px;top:20px;width:78px;height:42px"><svg width="78" height="42" viewBox="0 0 78 42" preserveAspectRatio="none" style="position:absolute;left:0;top:0"><rect width="78" height="42" fill="#2e9a8c"/><path d="M0 0 H20 C14 6 8 8 0 8 Z" fill="#3a7ab0"/><path d="M0 10 C10 8 22 14 24 22 C26 30 20 40 10 42 H0 Z" fill="#9aa040"/><path d="M20 0 H70 C64 8 56 12 48 10 C40 8 30 6 20 4 Z" fill="#3e6a4a"/><path d="M46 14 C52 16 56 22 54 30 C50 26 46 20 46 14 Z" fill="#4a6a40"/><path d="M70 0 H78 V20 C74 14 70 8 70 0 Z" fill="#5a8a6a"/><path d="M28 20 C36 22 44 30 50 40" stroke="#7ab8b0" stroke-width="3" fill="none" opacity=".6"/></svg><i style="left:0;top:40px;width:78px;height:2px;background:#cfe0e8"></i></div><div class="tx" style="left:72px;top:65px;width:17px"></div><div class="a" style="left:12px;top:68px;width:78px;height:42px;background:#050505"></div><div class="tx" style="left:76px;top:113px;width:13px"></div><div class="tx" style="left:15px;top:116px;width:14px"></div><div class="bd"></div></div><div class="pg" style="left:520px;top:669px"><div class="tx" style="left:71px;top:13px;width:17px"></div><div class="tx" style="left:74px;top:18px;width:14px"></div><div class="tx" style="left:50px;top:22px;width:38px"></div><div class="tx" style="left:59px;top:28px;width:29px"></div><div class="tx" style="left:44px;top:31px;width:44px"></div><div class="ss" style="left:12px;top:35px;width:78px;height:43px;background:#f8f8f8;border:1px solid #e4e4e4"><i style="left:26px;top:8px;width:14px;height:31px;background:repeating-linear-gradient(90deg,#bcd4ec 0 2px,#e0ecf8 2px 5px)"></i><i style="left:3px;top:6px;width:14px;height:33px;background:repeating-linear-gradient(#d0d0d0 0 1px,transparent 1px 3px)"></i><i style="left:0;top:40px;width:78px;height:2px;background:#f0c8c0"></i></div><div class="bd"></div></div><div class="pg" style="left:628px;top:669px"><div class="tx" style="left:68px;top:13px;width:21px"></div><div class="ss" style="left:12px;top:16px;width:78px;height:42px"><svg width="78" height="42" viewBox="0 0 78 42" preserveAspectRatio="none" style="position:absolute;left:0;top:0"><rect width="78" height="42" fill="#2e9a8c"/><path d="M0 0 H20 C14 6 8 8 0 8 Z" fill="#3a7ab0"/><path d="M0 10 C10 8 22 14 24 22 C26 30 20 40 10 42 H0 Z" fill="#9aa040"/><path d="M20 0 H70 C64 8 56 12 48 10 C40 8 30 6 20 4 Z" fill="#3e6a4a"/><path d="M46 14 C52 16 56 22 54 30 C50 26 46 20 46 14 Z" fill="#4a6a40"/><path d="M70 0 H78 V20 C74 14 70 8 70 0 Z" fill="#5a8a6a"/><path d="M28 20 C36 22 44 30 50 40" stroke="#7ab8b0" stroke-width="3" fill="none" opacity=".6"/></svg><i style="left:20px;top:4px;width:37px;height:33px;background:#eef0f0"></i><i style="left:0;top:40px;width:78px;height:2px;background:#cfe0e8"></i></div><div class="ss" style="left:12px;top:60px;width:78px;height:43px;background:#f8f8f8;border:1px solid #e4e4e4"><i style="left:26px;top:8px;width:14px;height:31px;background:repeating-linear-gradient(90deg,#bcd4ec 0 2px,#e0ecf8 2px 5px)"></i><i style="left:3px;top:6px;width:14px;height:33px;background:repeating-linear-gradient(#d0d0d0 0 1px,transparent 1px 3px)"></i><i style="left:0;top:40px;width:78px;height:2px;background:#f0c8c0"></i></div><div class="bd"></div></div><div class="pg" style="left:736px;top:669px"><div class="tx" style="left:12px;top:13px;width:77px"></div><div class="tx" style="left:47px;top:17px;width:42px"></div><div class="tx" style="left:57px;top:20px;width:32px"></div><div class="tx" style="left:71px;top:25px;width:18px"></div><div class="tx" style="left:12px;top:29px;width:77px"></div><div class="tx" style="left:60px;top:34px;width:29px"></div><div class="tx" style="left:24px;top:38px;width:65px"></div><div class="tx" style="left:23px;top:43px;width:66px"></div><div class="tx" style="left:14px;top:49px;width:40px"></div><div class="tx" style="left:14px;top:52px;width:40px"></div><div class="tx" style="left:78px;top:56px;width:11px"></div><div class="tx" style="left:31px;top:62px;width:58px"></div><div class="tx" style="left:14px;top:66px;width:75px"></div><div class="tx" style="left:66px;top:70px;width:23px"></div><div class="tx" style="left:66px;top:74px;width:23px"></div><div class="tx" style="left:14px;top:79px;width:24px"></div><div class="tx" style="left:14px;top:84px;width:39px"></div><div class="tx" style="left:55px;top:89px;width:34px"></div><div class="tx" style="left:58px;top:93px;width:31px"></div><div class="tx" style="left:38px;top:99px;width:51px"></div><div class="bd"></div></div><div class="pg" style="left:844px;top:669px"><div class="tx" style="left:65px;top:13px;width:24px"></div><div class="tx" style="left:40px;top:16px;width:49px"></div><div class="tx" style="left:14px;top:21px;width:40px"></div><div class="tx" style="left:17px;top:27px;width:72px"></div><div class="tx" style="left:41px;top:31px;width:48px"></div><div class="tx" style="left:15px;top:37px;width:74px"></div><div class="tx" style="left:18px;top:40px;width:71px"></div><div class="tx" style="left:48px;top:44px;width:41px"></div><div class="tx" style="left:17px;top:50px;width:72px"></div><div class="tx" style="left:13px;top:54px;width:76px"></div><div class="tx" style="left:38px;top:58px;width:51px"></div><div class="tx" style="left:20px;top:62px;width:69px"></div><div class="tx" style="left:42px;top:66px;width:47px"></div><div class="tx" style="left:13px;top:70px;width:76px"></div><div class="tx" style="left:14px;top:74px;width:37px"></div><div class="tx" style="left:11px;top:78px;width:78px"></div><div class="tx" style="left:13px;top:81px;width:76px"></div><div class="tx" style="left:24px;top:85px;width:65px"></div><div class="tx" style="left:14px;top:90px;width:35px"></div><div class="tx" style="left:19px;top:95px;width:70px"></div><div class="tx" style="left:29px;top:99px;width:60px"></div><div class="tx" style="left:71px;top:105px;width:18px"></div><div class="bd"></div></div><div class="pg" style="left:952px;top:669px"><div class="tx" style="left:30px;top:13px;width:59px"></div><div class="tx" style="left:45px;top:17px;width:44px"></div><div class="tx" style="left:12px;top:22px;width:45px"></div><div class="ss" style="left:12px;top:26px;width:78px;height:39px;background:#f9f9f9"><i style="left:0;top:0;width:78px;height:3px;background:#3c3c3c"></i><i style="left:0;top:4px;width:12px;height:2px;background:#8cbce6"></i><i style="left:14px;top:4px;width:62px;height:1px;background:#e6e6e6"></i><i style="left:11px;top:8px;width:1px;height:28px;background:#ececec"></i><i style="left:26px;top:9px;width:35px;height:26px;background:#fff;border:1px solid #ececec"></i><i style="left:14px;top:9px;width:9px;height:22px;background:repeating-linear-gradient(#ebebeb 0 1px,transparent 1px 3px)"></i><i style="left:2px;top:8px;width:7px;height:6px;background:repeating-linear-gradient(#e4e4e4 0 1px,transparent 1px 2px)"></i><i style="left:0;top:37px;width:78px;height:1px;background:#d8d8d8"></i></div><div class="tx" style="left:50px;top:68px;width:39px"></div><div class="ss" style="left:12px;top:72px;width:78px;height:38px;background:#f9f9f9"><i style="left:0;top:0;width:78px;height:3px;background:#3c3c3c"></i><i style="left:0;top:4px;width:12px;height:2px;background:#8cbce6"></i><i style="left:14px;top:4px;width:62px;height:1px;background:#e6e6e6"></i><i style="left:11px;top:8px;width:1px;height:27px;background:#ececec"></i><i style="left:26px;top:9px;width:35px;height:25px;background:#fff;border:1px solid #ececec"></i><i style="left:14px;top:9px;width:9px;height:22px;background:repeating-linear-gradient(#ebebeb 0 1px,transparent 1px 3px)"></i><i style="left:2px;top:8px;width:7px;height:6px;background:repeating-linear-gradient(#e4e4e4 0 1px,transparent 1px 2px)"></i><i style="left:0;top:36px;width:78px;height:1px;background:#d8d8d8"></i></div><div class="bd"></div></div><div class="pg" style="left:1060px;top:669px"><div class="tx" style="left:72px;top:13px;width:17px"></div><div class="ss" style="left:12px;top:17px;width:78px;height:38px;background:#f9f9f9"><i style="left:0;top:0;width:78px;height:3px;background:#3c3c3c"></i><i style="left:0;top:4px;width:12px;height:2px;background:#8cbce6"></i><i style="left:14px;top:4px;width:62px;height:1px;background:#e6e6e6"></i><i style="left:11px;top:8px;width:1px;height:27px;background:#ececec"></i><i style="left:26px;top:9px;width:35px;height:25px;background:#fff;border:1px solid #ececec"></i><i style="left:14px;top:9px;width:9px;height:22px;background:repeating-linear-gradient(#ebebeb 0 1px,transparent 1px 3px)"></i><i style="left:2px;top:8px;width:7px;height:6px;background:repeating-linear-gradient(#e4e4e4 0 1px,transparent 1px 2px)"></i><i style="left:0;top:36px;width:78px;height:1px;background:#d8d8d8"></i></div><div class="tx" style="left:85px;top:60px;width:4px"></div><div class="ss" style="left:12px;top:62px;width:78px;height:42px;background:#f9f9f9"><i style="left:0;top:0;width:78px;height:3px;background:#3c3c3c"></i><i style="left:0;top:4px;width:12px;height:2px;background:#8cbce6"></i><i style="left:14px;top:4px;width:62px;height:1px;background:#e6e6e6"></i><i style="left:11px;top:8px;width:1px;height:31px;background:#ececec"></i><i style="left:26px;top:9px;width:35px;height:29px;background:#fff;border:1px solid #ececec"></i><i style="left:14px;top:9px;width:9px;height:22px;background:repeating-linear-gradient(#ebebeb 0 1px,transparent 1px 3px)"></i><i style="left:2px;top:8px;width:7px;height:6px;background:repeating-linear-gradient(#e4e4e4 0 1px,transparent 1px 2px)"></i><i style="left:0;top:40px;width:78px;height:1px;background:#d8d8d8"></i></div><div class="a" style="left:12px;top:101px;width:78px;height:2px;background:#050505"></div><div class="tx" style="left:46px;top:107px;width:43px"></div><div class="bd"></div></div><div class="pg" style="left:1168px;top:669px"><div class="tx" style="left:73px;top:13px;width:16px"></div><div class="tx" style="left:12px;top:17px;width:14px"></div><div class="ss" style="left:12px;top:21px;width:78px;height:39px;background:#f9f9f9"><i style="left:0;top:0;width:78px;height:3px;background:#3c3c3c"></i><i style="left:0;top:4px;width:12px;height:2px;background:#8cbce6"></i><i style="left:14px;top:4px;width:62px;height:1px;background:#e6e6e6"></i><i style="left:11px;top:8px;width:1px;height:28px;background:#ececec"></i><i style="left:26px;top:9px;width:35px;height:26px;background:#fff;border:1px solid #ececec"></i><i style="left:14px;top:9px;width:9px;height:22px;background:repeating-linear-gradient(#ebebeb 0 1px,transparent 1px 3px)"></i><i style="left:2px;top:8px;width:7px;height:6px;background:repeating-linear-gradient(#e4e4e4 0 1px,transparent 1px 2px)"></i><i style="left:0;top:37px;width:78px;height:1px;background:#d8d8d8"></i></div><div class="ss" style="left:12px;top:66px;width:78px;height:39px;background:#f9f9f9"><i style="left:0;top:0;width:78px;height:3px;background:#3c3c3c"></i><i style="left:0;top:4px;width:12px;height:2px;background:#8cbce6"></i><i style="left:14px;top:4px;width:62px;height:1px;background:#e6e6e6"></i><i style="left:11px;top:8px;width:1px;height:28px;background:#ececec"></i><i style="left:26px;top:9px;width:35px;height:26px;background:#fff;border:1px solid #ececec"></i><i style="left:14px;top:9px;width:9px;height:22px;background:repeating-linear-gradient(#ebebeb 0 1px,transparent 1px 3px)"></i><i style="left:2px;top:8px;width:7px;height:6px;background:repeating-linear-gradient(#e4e4e4 0 1px,transparent 1px 2px)"></i><i style="left:0;top:37px;width:78px;height:1px;background:#d8d8d8"></i></div><div class="bd"></div></div><div class="pg" style="left:1276px;top:669px"><div class="tx" style="left:84px;top:13px;width:5px"></div><div class="tx" style="left:12px;top:17px;width:77px;height:2px;background:repeating-linear-gradient(90deg,#803030 0 3px,rgba(0,0,0,.5) 3px 5px,#803030 5px 7px,transparent 7px 8px)"></div><div class="ss" style="left:12px;top:21px;width:78px;height:39px;background:#f9f9f9"><i style="left:0;top:0;width:78px;height:3px;background:#3c3c3c"></i><i style="left:0;top:4px;width:12px;height:2px;background:#8cbce6"></i><i style="left:14px;top:4px;width:62px;height:1px;background:#e6e6e6"></i><i style="left:11px;top:8px;width:1px;height:28px;background:#ececec"></i><i style="left:26px;top:9px;width:35px;height:26px;background:#fff;border:1px solid #ececec"></i><i style="left:14px;top:9px;width:9px;height:22px;background:repeating-linear-gradient(#ebebeb 0 1px,transparent 1px 3px)"></i><i style="left:2px;top:8px;width:7px;height:6px;background:repeating-linear-gradient(#e4e4e4 0 1px,transparent 1px 2px)"></i><i style="left:0;top:37px;width:78px;height:1px;background:#d8d8d8"></i></div><div class="tx" style="left:30px;top:62px;width:59px"></div><div class="tx" style="left:30px;top:66px;width:59px"></div><div class="tx" style="left:12px;top:70px;width:33px"></div><div class="ss" style="left:12px;top:74px;width:78px;height:39px;background:#f9f9f9"><i style="left:0;top:0;width:78px;height:3px;background:#3c3c3c"></i><i style="left:0;top:4px;width:12px;height:2px;background:#8cbce6"></i><i style="left:14px;top:4px;width:62px;height:1px;background:#e6e6e6"></i><i style="left:11px;top:8px;width:1px;height:28px;background:#ececec"></i><i style="left:26px;top:9px;width:35px;height:26px;background:#fff;border:1px solid #ececec"></i><i style="left:14px;top:9px;width:9px;height:22px;background:repeating-linear-gradient(#ebebeb 0 1px,transparent 1px 3px)"></i><i style="left:2px;top:8px;width:7px;height:6px;background:repeating-linear-gradient(#e4e4e4 0 1px,transparent 1px 2px)"></i><i style="left:0;top:37px;width:78px;height:1px;background:#d8d8d8"></i></div><div class="bd"></div></div><div class="pg" style="left:1384px;top:669px"><div class="ss" style="left:12px;top:13px;width:78px;height:38px;background:#f9f9f9"><i style="left:0;top:0;width:78px;height:3px;background:#3c3c3c"></i><i style="left:0;top:4px;width:12px;height:2px;background:#8cbce6"></i><i style="left:14px;top:4px;width:62px;height:1px;background:#e6e6e6"></i><i style="left:11px;top:8px;width:1px;height:27px;background:#ececec"></i><i style="left:26px;top:9px;width:35px;height:25px;background:#fff;border:1px solid #ececec"></i><i style="left:14px;top:9px;width:9px;height:22px;background:repeating-linear-gradient(#ebebeb 0 1px,transparent 1px 3px)"></i><i style="left:2px;top:8px;width:7px;height:6px;background:repeating-linear-gradient(#e4e4e4 0 1px,transparent 1px 2px)"></i><i style="left:0;top:36px;width:78px;height:1px;background:#d8d8d8"></i><i style="left:20px;top:0;width:30px;height:35px;background:#f3f3f3;border:1px solid #e0e0e0"></i><i style="left:22px;top:2px;width:25px;height:1px;background:#d8d8d8"></i><i style="left:22px;top:6px;width:22px;height:3px;background:repeating-linear-gradient(90deg,#e0e0e0 0 4px,transparent 4px 8px)"></i><i style="left:22px;top:20px;width:26px;height:13px;background:#fcfcfc;border:1px solid #e2e2e2"></i></div><div class="tx" style="left:50px;top:55px;width:39px"></div><div class="ss" style="left:12px;top:59px;width:78px;height:39px;background:#f9f9f9"><i style="left:0;top:0;width:78px;height:3px;background:#3c3c3c"></i><i style="left:0;top:4px;width:12px;height:2px;background:#8cbce6"></i><i style="left:14px;top:4px;width:62px;height:1px;background:#e6e6e6"></i><i style="left:11px;top:8px;width:1px;height:28px;background:#ececec"></i><i style="left:26px;top:9px;width:35px;height:26px;background:#fff;border:1px solid #ececec"></i><i style="left:14px;top:9px;width:9px;height:22px;background:repeating-linear-gradient(#ebebeb 0 1px,transparent 1px 3px)"></i><i style="left:2px;top:8px;width:7px;height:6px;background:repeating-linear-gradient(#e4e4e4 0 1px,transparent 1px 2px)"></i><i style="left:0;top:37px;width:78px;height:1px;background:#d8d8d8"></i><i style="left:20px;top:0;width:30px;height:36px;background:#f3f3f3;border:1px solid #e0e0e0"></i><i style="left:22px;top:2px;width:25px;height:1px;background:#d8d8d8"></i><i style="left:22px;top:6px;width:22px;height:3px;background:repeating-linear-gradient(90deg,#e0e0e0 0 4px,transparent 4px 8px)"></i><i style="left:22px;top:21px;width:26px;height:13px;background:#fcfcfc;border:1px solid #e2e2e2"></i></div><div class="tx" style="left:73px;top:101px;width:16px"></div><div class="bd"></div></div><div class="pg" style="left:1492px;top:669px"><div class="ss" style="left:12px;top:13px;width:78px;height:38px;background:#f9f9f9"><i style="left:0;top:0;width:78px;height:3px;background:#3c3c3c"></i><i style="left:0;top:4px;width:12px;height:2px;background:#8cbce6"></i><i style="left:14px;top:4px;width:62px;height:1px;background:#e6e6e6"></i><i style="left:11px;top:8px;width:1px;height:27px;background:#ececec"></i><i style="left:26px;top:9px;width:35px;height:25px;background:#fff;border:1px solid #ececec"></i><i style="left:14px;top:9px;width:9px;height:22px;background:repeating-linear-gradient(#ebebeb 0 1px,transparent 1px 3px)"></i><i style="left:2px;top:8px;width:7px;height:6px;background:repeating-linear-gradient(#e4e4e4 0 1px,transparent 1px 2px)"></i><i style="left:0;top:36px;width:78px;height:1px;background:#d8d8d8"></i></div><div class="tx" style="left:56px;top:55px;width:33px"></div><div class="tx" style="left:15px;top:59px;width:15px;height:2px;background:repeating-linear-gradient(90deg,#c03030 0 3px,rgba(0,0,0,.5) 3px 5px,#c03030 5px 7px,transparent 7px 8px)"></div><div class="ss" style="left:12px;top:62px;width:78px;height:41px"><svg width="78" height="41" viewBox="0 0 78 42" preserveAspectRatio="none" style="position:absolute;left:0;top:0"><rect width="78" height="42" fill="#2e9a8c"/><path d="M0 0 H20 C14 6 8 8 0 8 Z" fill="#3a7ab0"/><path d="M0 10 C10 8 22 14 24 22 C26 30 20 40 10 42 H0 Z" fill="#9aa040"/><path d="M20 0 H70 C64 8 56 12 48 10 C40 8 30 6 20 4 Z" fill="#3e6a4a"/><path d="M46 14 C52 16 56 22 54 30 C50 26 46 20 46 14 Z" fill="#4a6a40"/><path d="M70 0 H78 V20 C74 14 70 8 70 0 Z" fill="#5a8a6a"/><path d="M28 20 C36 22 44 30 50 40" stroke="#7ab8b0" stroke-width="3" fill="none" opacity=".6"/></svg><i style="left:2px;top:29px;width:18px;height:9px;background:#eaeaea"></i><i style="left:0;top:39px;width:78px;height:2px;background:#cfe0e8"></i></div><div class="bd"></div></div><div class="pg" style="left:1600px;top:669px"><div class="ss" style="left:12px;top:12px;width:78px;height:41px"><svg width="78" height="41" viewBox="0 0 78 42" preserveAspectRatio="none" style="position:absolute;left:0;top:0"><rect width="78" height="42" fill="#2e9a8c"/><path d="M0 0 H20 C14 6 8 8 0 8 Z" fill="#3a7ab0"/><path d="M0 10 C10 8 22 14 24 22 C26 30 20 40 10 42 H0 Z" fill="#9aa040"/><path d="M20 0 H70 C64 8 56 12 48 10 C40 8 30 6 20 4 Z" fill="#3e6a4a"/><path d="M46 14 C52 16 56 22 54 30 C50 26 46 20 46 14 Z" fill="#4a6a40"/><path d="M70 0 H78 V20 C74 14 70 8 70 0 Z" fill="#5a8a6a"/><path d="M28 20 C36 22 44 30 50 40" stroke="#7ab8b0" stroke-width="3" fill="none" opacity=".6"/></svg><i style="left:7px;top:6px;width:53px;height:29px;background:#121010"></i><i style="left:0;top:39px;width:78px;height:2px;background:#cfe0e8"></i></div><div class="tx" style="left:51px;top:57px;width:38px"></div><div class="tx" style="left:15px;top:61px;width:15px;height:2px;background:repeating-linear-gradient(90deg,#c03030 0 3px,rgba(0,0,0,.5) 3px 5px,#c03030 5px 7px,transparent 7px 8px)"></div><div class="a" style="left:12px;top:64px;width:78px;height:42px;background:#050505"></div><div class="tx" style="left:58px;top:110px;width:31px"></div><div class="bd"></div></div><div class="pg" style="left:1708px;top:669px"><div class="tx" style="left:62px;top:13px;width:27px"></div><div class="ss" style="left:12px;top:16px;width:78px;height:41px"><svg width="78" height="41" viewBox="0 0 78 42" preserveAspectRatio="none" style="position:absolute;left:0;top:0"><rect width="78" height="42" fill="#2e9a8c"/><path d="M0 0 H20 C14 6 8 8 0 8 Z" fill="#3a7ab0"/><path d="M0 10 C10 8 22 14 24 22 C26 30 20 40 10 42 H0 Z" fill="#9aa040"/><path d="M20 0 H70 C64 8 56 12 48 10 C40 8 30 6 20 4 Z" fill="#3e6a4a"/><path d="M46 14 C52 16 56 22 54 30 C50 26 46 20 46 14 Z" fill="#4a6a40"/><path d="M70 0 H78 V20 C74 14 70 8 70 0 Z" fill="#5a8a6a"/><path d="M28 20 C36 22 44 30 50 40" stroke="#7ab8b0" stroke-width="3" fill="none" opacity=".6"/></svg><i style="left:20px;top:4px;width:37px;height:32px;background:#eef0f0"></i><i style="left:0;top:39px;width:78px;height:2px;background:#cfe0e8"></i></div><div class="ss" style="left:12px;top:60px;width:78px;height:41px"><svg width="78" height="41" viewBox="0 0 78 42" preserveAspectRatio="none" style="position:absolute;left:0;top:0"><rect width="78" height="42" fill="#2e9a8c"/><path d="M0 0 H20 C14 6 8 8 0 8 Z" fill="#3a7ab0"/><path d="M0 10 C10 8 22 14 24 22 C26 30 20 40 10 42 H0 Z" fill="#9aa040"/><path d="M20 0 H70 C64 8 56 12 48 10 C40 8 30 6 20 4 Z" fill="#3e6a4a"/><path d="M46 14 C52 16 56 22 54 30 C50 26 46 20 46 14 Z" fill="#4a6a40"/><path d="M70 0 H78 V20 C74 14 70 8 70 0 Z" fill="#5a8a6a"/><path d="M28 20 C36 22 44 30 50 40" stroke="#7ab8b0" stroke-width="3" fill="none" opacity=".6"/></svg><i style="left:30px;top:18px;width:17px;height:6px;background:#f4f4f4"></i><i style="left:0;top:39px;width:78px;height:2px;background:#cfe0e8"></i></div><div class="tx" style="left:50px;top:105px;width:39px"></div><div class="bd"></div></div>
<div class="t" style="left:10px;top:1001px;font-size:12.9px;color:#e6e6e6">Page 1 of 50</div>
<div class="t" style="left:108px;top:1001px;font-size:13.1px;color:#e6e6e6">2801 words</div>
<svg class="a" style="left:199px;top:998px" width="20" height="19" viewBox="0 0 20 19" fill="none" stroke="#ccc" stroke-width="1.3"><path d="M1 2 H8 M1 2 V16 H8 M8 2 C9 1 11 1 12 2 V9"/><path d="M12 2 H16 V8"/><path d="M10 10 L18 18 M18 10 L10 18"/></svg>
<div class="t" style="left:240px;top:1001px;font-size:12.8px;color:#e6e6e6">English (United States)</div>

<svg class="a" style="left:1478px;top:997px" width="20" height="20" viewBox="0 0 20 20" fill="none" stroke="#ddd" stroke-width="1.3"><path d="M1 5 V1 H5 M15 1 H19 V5 M19 15 V19 H15 M5 19 H1 V15"/><path d="M6 4 H11 L14 7 V16 H6 Z M11 4 V7 H14"/></svg>
<div class="t" style="left:1500px;top:1001px;font-size:12.9px;color:#e6e6e6">Focus</div>
<svg class="a" style="left:1563px;top:997px" width="19" height="19" viewBox="0 0 19 19" fill="none" stroke="#ddd" stroke-width="1.3"><path d="M1 2 H8 C9 2 9.5 3 9.5 4 C9.5 3 10 2 11 2 H18 V16 H11 L9.5 17.5 L8 16 H1 Z M9.5 4 V17"/><path d="M3 6 H7 M3 9 H7 M3 12 H7 M12 6 H16 M12 9 H16 M12 12 H16" stroke-width="1"/></svg>
<div class="a" style="left:1598px;top:994px;width:51px;height:26px;background:#484848"></div>
<svg class="a" style="left:1614px;top:997px" width="18" height="20" viewBox="0 0 18 20" fill="none" stroke="#eee" stroke-width="1.3"><rect x="2" y="1" width="14" height="18"/><path d="M5 5 H13 M5 8 H13 M5 11 H13 M5 14 H13" stroke-width="1"/></svg>
<svg class="a" style="left:1663px;top:997px" width="21" height="20" viewBox="0 0 21 20" fill="none" stroke="#ddd" stroke-width="1.3"><path d="M10 17 H1 V1 H16 V9"/><path d="M4 5 H13 M4 8 H10 M4 11 H8" stroke-width="1"/><circle cx="15" cy="14" r="5" fill="#2b2b2b"/><path d="M10 14 H20 M15 9 V19" stroke-width="1"/></svg>
<div class="a" style="left:1705px;top:1007px;width:9px;height:1.3px;background:#ddd"></div>
<div class="a" style="left:1723px;top:1007px;width:123px;height:1px;background:#ccc"></div>
<div class="a" style="left:1782px;top:1004px;width:1px;height:7px;background:#ccc"></div>
<div class="a" style="left:1721px;top:1000px;width:6px;height:14px;background:#eee"></div>
<div class="a" style="left:1852px;top:1007px;width:10px;height:1.3px;background:#ddd"></div>
<div class="a" style="left:1856px;top:1002px;width:1.3px;height:10px;background:#ddd"></div>
<div class="t" style="left:1878px;top:1001px;font-size:12.2px;color:#e6e6e6">10%</div>

<!-- weather -->
<svg class="a" style="left:24px;top:1033px" width="34" height="32" viewBox="0 0 34 32" fill="none">
 <path d="M4 11 C4 7 8 4 12 4 C14 2 18 2 18 6 C16 8 16 12 18 14 H5 C3 14 3 12 4 11 Z" fill="#b8cef0"/>
 <path d="M6 20 C10 24 22 24 28 14 C32 22 26 30 16 30 C10 30 6 26 6 20 Z" fill="#f5a020"/>
</svg>
<div class="t" style="left:42px;top:1033px;font-size:13px;color:#fff">23°</div>
<!-- start -->
<svg class="a" style="left:265px;top:1035px" width="31" height="31" viewBox="0 0 31 31">
 <defs><linearGradient id="wg" x1="0" y1="0" x2="1" y2="1"><stop offset="0" stop-color="#7ee0ff"/><stop offset="1" stop-color="#1a9ae8"/></linearGradient></defs>
 <rect x="0" y="0" width="14.5" height="14.5" fill="url(#wg)"/><rect x="16" y="0" width="14.5" height="14.5" fill="url(#wg)"/>
 <rect x="0" y="16" width="14.5" height="14.5" fill="url(#wg)"/><rect x="16" y="16" width="14.5" height="14.5" fill="url(#wg)"/>
</svg>
<div class="a" style="left:311px;top:1030px;width:276px;height:40px;border-radius:20px;background:linear-gradient(90deg,#4a3a38,#553e3a 50%,#4e3b39);border:1px solid #5a4a48"></div>
<svg class="a" style="left:326px;top:1040px" width="21" height="21" viewBox="0 0 21 21" fill="none" stroke="#e8e0e0" stroke-width="2"><circle cx="8.5" cy="8.5" r="6.5"/><path d="M13.5 13.5 L19 19"/></svg>
<div class="t" style="left:358px;top:1042px;font-size:16.5px;color:#e8e0e0">Search</div>
<!-- task view -->
<div class="a" style="left:602px;top:1044px;width:23px;height:20px;background:#6a6a6a;border-radius:2px"></div>
<div class="a" style="left:610px;top:1036px;width:22px;height:20px;background:linear-gradient(135deg,#fff,#d8d8d8);border-radius:2px"></div>
<!-- explorer -->
<svg class="a" style="left:656px;top:1036px" width="32" height="29" viewBox="0 0 32 29">
 <path d="M0 3 Q0 1 2 1 H10 L13 4 H30 Q32 4 32 6 V27 Q32 28 30 28 H2 Q0 28 0 26 Z" fill="#f5c842"/>
 <path d="M0 6 H32 V26 Q32 28 30 28 H2 Q0 28 0 26 Z" fill="#ffd75a"/>
 <rect x="6" y="19" width="20" height="9" rx="1.5" fill="#1f78d0"/><rect x="10" y="21" width="12" height="1.5" fill="#9cd0ff"/>
</svg>
<div class="a" style="left:669px;top:1070px;width:8px;height:3px;border-radius:2px;background:#c0b0b0"></div>
<!-- blue app -->
<svg class="a" style="left:712px;top:1035px" width="31" height="30" viewBox="0 0 31 30">
 <rect width="31" height="30" fill="#1a6ee0"/><path d="M5 22 L12 8 H15 L8 22 Z M12 22 L19 8 H22 L15 22 Z" fill="#d8e8ff"/><path d="M20 22 L23 14 L26 22 Z" fill="#fff"/>
</svg>
<!-- calendar -->
<svg class="a" style="left:768px;top:1035px" width="28" height="29" viewBox="0 0 28 29">
 <rect x="0" y="3" width="28" height="26" rx="3" fill="#1e90e0"/><rect x="0" y="3" width="28" height="6" rx="2" fill="#1670c0"/>
 <rect x="5" y="0" width="3" height="7" rx="1.5" fill="#60c0f0"/><rect x="20" y="0" width="3" height="7" rx="1.5" fill="#60c0f0"/>
 <g fill="#e8f4ff"><rect x="9" y="12" width="3" height="3"/><rect x="14" y="12" width="3" height="3"/><rect x="19" y="12" width="3" height="3"/><rect x="4" y="17" width="3" height="3"/><rect x="9" y="17" width="3" height="3"/><rect x="14" y="17" width="3" height="3"/><rect x="19" y="17" width="3" height="3"/><rect x="4" y="22" width="3" height="3"/><rect x="9" y="22" width="3" height="3"/><rect x="14" y="22" width="3" height="3"/></g>
</svg>
<!-- solitaire -->
<svg class="a" style="left:822px;top:1035px" width="30" height="29" viewBox="0 0 30 29">
 <rect x="12" y="3" width="16" height="22" rx="2" fill="#3aa0e0" transform="rotate(8 20 14)"/>
 <rect x="2" y="5" width="17" height="23" rx="2" fill="#f4f4f4" transform="rotate(-8 10 16)"/>
 <path d="M10 9 C6 14 5 17 8 18 C9 18 10 17 10 17 L9 21 H12 L11 17 C11 17 12 18 13 18 C16 17 14 14 10 9 Z" fill="#111"/>
 <path d="M25 0 V8 M21 4 H29" stroke="#fff" stroke-width="2"/>
</svg>
<!-- calculator -->
<svg class="a" style="left:881px;top:1035px" width="22" height="29" viewBox="0 0 22 29">
 <rect width="22" height="29" rx="2" fill="#6a7a88"/><rect x="2" y="2" width="18" height="6" fill="#2ab0e0"/>
 <g fill="#dde"><rect x="2" y="11" width="5" height="4"/><rect x="8.5" y="11" width="5" height="4"/><rect x="15" y="11" width="5" height="4"/><rect x="2" y="17" width="5" height="4"/><rect x="8.5" y="17" width="5" height="4"/><rect x="2" y="23" width="5" height="4"/><rect x="8.5" y="23" width="5" height="4"/></g><rect x="15" y="17" width="5" height="10" fill="#1a60a8"/>
</svg>
<!-- camera -->
<svg class="a" style="left:932px;top:1036px" width="30" height="25" viewBox="0 0 30 25">
 <rect x="0" y="5" width="30" height="20" rx="3" fill="#7a7f86"/><rect x="9" y="0" width="12" height="7" rx="2" fill="#7a7f86"/><rect x="2" y="3" width="4" height="3" fill="#2ab0e0"/>
 <circle cx="15" cy="14" r="6.5" fill="#e0e0f0"/><path d="M8.5 14 A6.5 6.5 0 0 1 21.5 14 Z" fill="#8a60e0"/>
</svg>
<!-- discord -->
<svg class="a" style="left:986px;top:1035px" width="31" height="31" viewBox="0 0 31 31">
 <circle cx="15.5" cy="15.5" r="15" fill="#5865f2"/>
 <path d="M8 10 Q15.5 6 23 10 Q26 16 24 21 Q21 23 19 23 L18 21 Q15.5 22 13 21 L12 23 Q10 23 7 21 Q5 16 8 10 Z" fill="#fff"/>
 <circle cx="12.5" cy="16" r="2" fill="#5865f2"/><circle cx="18.5" cy="16" r="2" fill="#5865f2"/>
</svg>
<!-- firefox -->
<svg class="a" style="left:1042px;top:1035px" width="30" height="30" viewBox="0 0 30 30">
 <defs><radialGradient id="ff" cx="0.6" cy="0.2" r="0.9"><stop offset="0" stop-color="#ffe040"/><stop offset="0.45" stop-color="#ff8a20"/><stop offset="0.8" stop-color="#f03050"/><stop offset="1" stop-color="#c02080"/></radialGradient></defs>
 <path d="M15 29 C6 29 1 22 1 15 C1 9 4 5 6 4 C6 7 7 9 9 10 C10 6 14 4 16 2 C15 5 17 7 20 8 C26 10 29 14 29 17 C29 24 23 29 15 29 Z" fill="url(#ff)"/>
 <circle cx="15" cy="16" r="6" fill="#7a3ad0"/><path d="M10 14 Q15 10 19 15 Q15 13 12 16 Z" fill="#ff9a30"/>
</svg>
<!-- whatsapp -->
<svg class="a" style="left:1096px;top:1034px" width="32" height="32" viewBox="0 0 32 32" fill="none">
 <path d="M4 29 L6 22 A13 13 0 1 1 11 27 Z" stroke="#2cd46a" stroke-width="2.6" stroke-linejoin="round"/>
 <path d="M11 10 C10 14 14 20 20 22 L22 19 L19 17 L17 19 C15 18 13 16 12 14 L14 12 L12 9 Z" fill="#2cd46a"/>
</svg>
<div class="a" style="left:1109px;top:1029px;width:27px;height:20px;border-radius:10px;background:#d4a4e0"></div>
<div class="t" style="left:1114px;top:1032px;font-size:14.5px;color:#1a1030">27</div>
<div class="a" style="left:1108px;top:1071px;width:8px;height:3px;border-radius:2px;background:#c0b0b0"></div>
<!-- chrome -->
<svg class="a" style="left:1152px;top:1035px" width="30" height="30" viewBox="0 0 30 30">
 <circle cx="15" cy="15" r="14.5" fill="#e33b2e"/>
 <path d="M15 15 L2.4 7.7 A14.5 14.5 0 0 0 10 28.6 Z" fill="#2aa24a"/>
 <path d="M15 15 L10 28.6 A14.5 14.5 0 0 0 29.5 15 L27.6 7.7 Z" fill="#fbc02d"/>
 <circle cx="15" cy="15" r="6.6" fill="#fff"/><circle cx="15" cy="15" r="5.2" fill="#1a73e8"/>
</svg>
<div class="a" style="left:1163px;top:1071px;width:8px;height:3px;border-radius:2px;background:#c0b0b0"></div>
<!-- teams -->
<div class="a" style="left:1197px;top:1025px;width:50px;height:50px;border-radius:5px;background:#633a3d"></div>
<svg class="a" style="left:1205px;top:1033px" width="36" height="32" viewBox="0 0 36 32">
 <circle cx="12" cy="8" r="4" fill="#7b83eb"/><rect x="6" y="12" width="14" height="14" rx="5" fill="#5b5fc7"/>
 <rect x="2" y="12" width="11" height="13" rx="2" fill="#4b53bc"/><text x="4.5" y="23" font-size="10" font-weight="bold" fill="#fff" font-family="Liberation Sans">T</text>
 <circle cx="25" cy="22" r="7" fill="#f0e4c0"/><text x="20.5" y="25" font-size="6.5" fill="#9a8a50" font-family="Liberation Sans">AA</text>
 <circle cx="28" cy="7" r="8" fill="#d83535" stroke="#3a1a1a" stroke-width="0.8"/>
</svg>
<div class="a" style="left:1208px;top:1070px;width:28px;height:4px;border-radius:2px;background:#f490a8"></div>
<!-- word -->
<svg class="a" style="left:1261px;top:1035px" width="30" height="29" viewBox="0 0 30 29">
 <rect x="7" y="0" width="23" height="29" rx="2" fill="#2b7cd3"/><rect x="7" y="10" width="23" height="10" fill="#185abd"/><rect x="7" y="20" width="23" height="9" rx="1" fill="#103f91"/>
 <rect x="0" y="6" width="16" height="16" rx="2" fill="#185abd"/><text x="2" y="19" font-size="12" font-weight="bold" fill="#fff" font-family="Liberation Sans">W</text>
</svg>
<div class="a" style="left:1273px;top:1071px;width:8px;height:3px;border-radius:2px;background:#c0b0b0"></div>

<!-- tray -->
<svg class="a" style="left:1388px;top:1044px" width="16" height="10"><path d="M1 9 L8 2 L15 9" stroke="#eee" stroke-width="1.8" fill="none"/></svg>
<svg class="a" style="left:1427px;top:1040px" width="17" height="20" viewBox="0 0 17 20" fill="none" stroke="#eee" stroke-width="1.8"><circle cx="8.5" cy="12" r="6.5"/><path d="M3 4 Q8.5 0 14 4"/></svg>
<svg class="a" style="left:1465px;top:1038px" width="24" height="24" viewBox="0 0 24 24">
 <path d="M10 1 L19 4 V12 C19 18 14 21 10 23 C5 21 1 18 1 12 V4 Z" fill="#2a8ae8"/><path d="M10 1 L19 4 V12 C19 18 14 21 10 23 Z" fill="#5ab4f8"/>
 <circle cx="17" cy="17" r="6" fill="#1aa048"/><path d="M14 17 L16.3 19.2 L20 15" stroke="#fff" stroke-width="1.6" fill="none"/>
</svg>
<svg class="a" style="left:1505px;top:1040px" width="22" height="20" viewBox="0 0 22 20"><rect width="22" height="20" fill="#1a2a10"/><path d="M4 10 Q11 3 18 10 Q11 17 4 10 Z" fill="none" stroke="#76b900" stroke-width="2"/><circle cx="11" cy="10" r="2.5" fill="#76b900"/></svg>
<svg class="a" style="left:1545px;top:1040px" width="24" height="20" viewBox="0 0 24 20">
 <circle cx="14" cy="8" r="7" fill="#4aa0e0"/><path d="M8 7 Q14 1 20 6" stroke="#8ad040" stroke-width="2" fill="none"/>
 <path d="M1 14 Q8 6 16 10 L13 6 L22 11 L14 17 L16 13 Q8 11 1 14 Z" fill="#f09020"/><path d="M4 16 Q10 12 16 14" stroke="#40b040" stroke-width="2" fill="none"/>
</svg>
<svg class="a" style="left:1586px;top:1038px" width="24" height="24" viewBox="0 0 24 24" fill="none" stroke="#eee" stroke-width="1.8">
 <path d="M3 10 A8 8 0 0 1 17 5 M17 1 V5 H13"/><path d="M15 19 A8 8 0 0 1 4 16 M2 20 V16 H6"/><circle cx="18" cy="18" r="4.5" fill="#f08a10" stroke="none"/>
</svg>
<div class="a" style="left:1616px;top:1025px;width:40px;height:49px;border-radius:5px;background:#3a2c2c;border:1px solid #4a3a3a"></div>
<svg class="a" style="left:1625px;top:1038px" width="22" height="24" viewBox="0 0 22 24" fill="none" stroke="#eee" stroke-width="1.8">
 <rect x="7" y="1" width="8" height="13" rx="4"/><path d="M3 11 A8 8 0 0 0 19 11 M11 19 V23"/><path d="M1 1 L21 23" />
</svg>
<div class="t" style="left:1676px;top:1041px;font-size:17px;color:#eee;font-family:'DejaVu Sans',sans-serif">ع</div>
<svg class="a" style="left:1719px;top:1040px" width="24" height="19" viewBox="0 0 24 19" fill="none" stroke="#eee" stroke-width="1.9">
 <path d="M1 6 A15 15 0 0 1 23 6"/><path d="M4.5 10 A10 10 0 0 1 19.5 10"/><path d="M8 14 A5 5 0 0 1 16 14"/><circle cx="12" cy="17" r="1.3" fill="#eee"/>
</svg>
<svg class="a" style="left:1750px;top:1039px" width="22" height="21" viewBox="0 0 22 21" fill="none" stroke="#eee" stroke-width="1.7">
 <path d="M1 7 H5 L11 2 V19 L5 14 H1 Z"/><path d="M14 7 Q16 10.5 14 14 M17 4 Q21 10.5 17 17"/>
</svg>
<svg class="a" style="left:1781px;top:1039px" width="26" height="20" viewBox="0 0 26 20" fill="none">
 <rect x="1" y="5" width="21" height="12" rx="2.5" stroke="#eee" stroke-width="1.7"/><rect x="23" y="8.5" width="2" height="5" fill="#eee"/>
 <rect x="3" y="7" width="17" height="8" rx="1" fill="#8ad08a"/><path d="M12 1 L8 10 H12 L10 17 L16 7 H12 Z" fill="#eee" stroke="#2a2020" stroke-width="0.8"/>
</svg>
<div class="t" style="left:1798px;width:100px;text-align:right;top:1032px;font-size:15.5px;color:#fff">10:22 PM</div>
<div class="t" style="left:1798px;width:100px;text-align:right;top:1052px;font-size:15.3px;color:#fff">3/18/2026</div>

<!-- watermark -->
<svg class="a" style="left:840px;top:960px" width="240" height="120" viewBox="0 0 240 120" fill="none">
 <g stroke="#c9c3c1" stroke-width="11" stroke-linecap="round" stroke-linejoin="round">
  <path d="M34 31.5 C22 31.5 20 38 20 46 C20 54 22 60 34 60 H212"/>
  <path d="M62.5 43 V60"/>
  <path d="M104 17 V60"/>
  <path d="M122 36 H140 V60"/>
  <circle cx="187.5" cy="48" r="11.5" stroke-width="12"/>
  <path d="M205 60 H212 C219 60 221 50 218 32"/>
 </g>
 <g fill="#c9c3c1">
  <circle cx="130" cy="19" r="7.5"/><circle cx="187" cy="19" r="7.5"/><circle cx="219" cy="19" r="7.5"/>
  <circle cx="35.5" cy="78" r="7" opacity=".92"/><circle cx="50" cy="78" r="7" opacity=".92"/>
 </g>
</svg>
<div class="t" style="left:861px;top:1041px;font-size:35.5px;font-weight:bold;color:#c9c3c1;opacity:.92">nafezly.com</div>

</body></html>
